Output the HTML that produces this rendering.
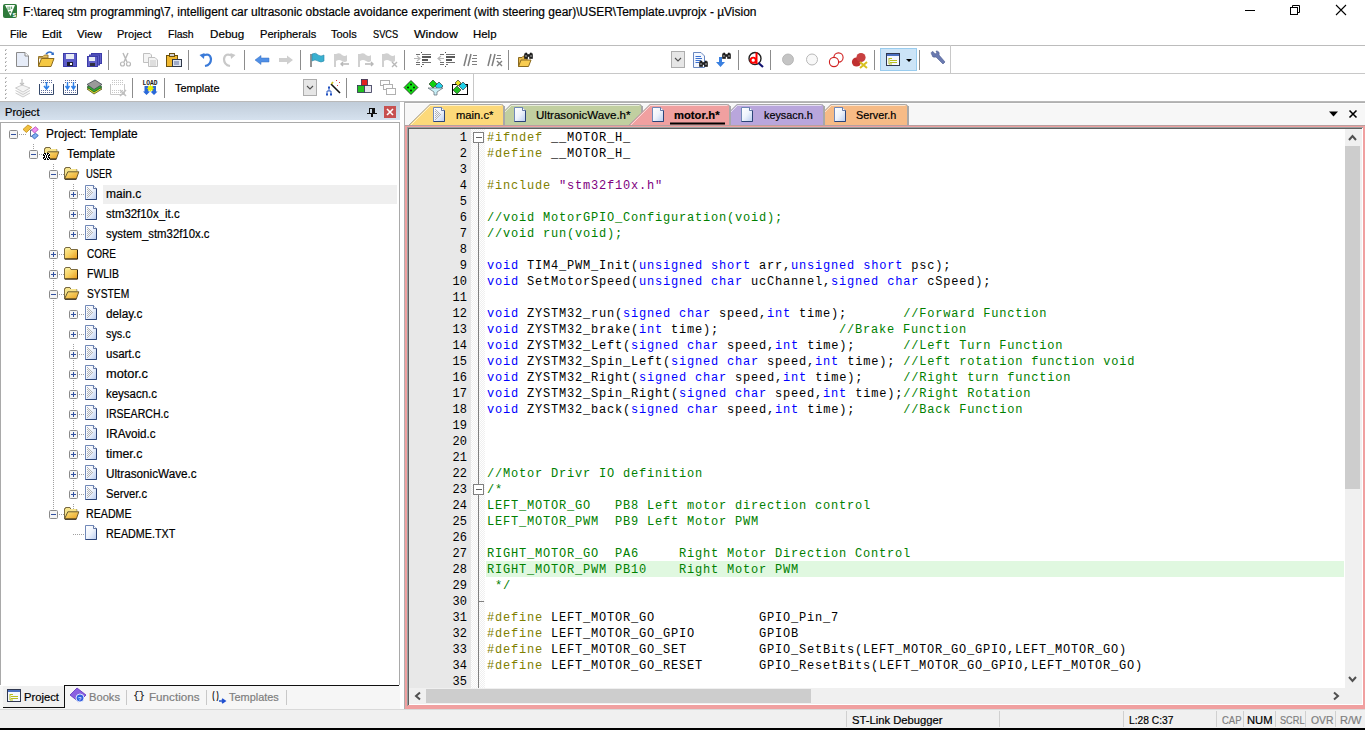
<!DOCTYPE html>
<html><head><meta charset="utf-8"><title>µVision</title>
<style>
html,body{margin:0;padding:0;width:1365px;height:730px;overflow:hidden;background:#fff;}
body{position:relative;font-family:"Liberation Sans", sans-serif;}
.tx{position:absolute;white-space:pre;line-height:1.117;transform-origin:0 0;-webkit-text-stroke:0.2px currentColor;}
.cl{position:absolute;left:487px;height:16px;white-space:pre;font-family:"Liberation Mono", monospace;font-size:12px;letter-spacing:0.8px;line-height:16px;color:#000;}
.ln{position:absolute;left:420px;width:47px;text-align:right;height:16px;font-family:"Liberation Mono", monospace;font-size:12px;line-height:16px;color:#000;}
svg{position:absolute;overflow:visible}
</style></head><body>
<div style="position:absolute;left:0px;top:0px;width:1365px;height:45px;background:#ffffff;"></div><div style="position:absolute;left:0px;top:45px;width:1365px;height:1px;background:#bcbcbc;"></div><div style="position:absolute;left:0px;top:46px;width:1365px;height:27px;background:#ffffff;"></div><div style="position:absolute;left:0px;top:73px;width:1365px;height:1px;background:#c8c8c8;"></div><div style="position:absolute;left:0px;top:74px;width:1365px;height:27px;background:#ffffff;"></div><div style="position:absolute;left:0px;top:101px;width:1365px;height:1px;background:#b9b9b9;"></div><div style="position:absolute;left:0px;top:102px;width:400px;height:607px;background:#ffffff;"></div><div style="position:absolute;left:0;top:102px;width:400px;height:18px;background:linear-gradient(#c0ccd9,#d5e1ee)"></div><div style="position:absolute;left:0px;top:122px;width:400px;height:1px;background:#a9a9a9;"></div><div style="position:absolute;left:0px;top:122px;width:1px;height:563px;background:#a9a9a9;"></div><div style="position:absolute;left:399px;top:122px;width:1px;height:563px;background:#a9a9a9;"></div><div style="position:absolute;left:0px;top:686px;width:400px;height:23px;background:#f6f6f6;"></div><div style="position:absolute;left:64px;top:685px;width:335px;height:1px;background:#101010;"></div><div style="position:absolute;left:3px;top:686px;width:62px;height:21px;background:#f0f0f0;"></div><div style="position:absolute;left:64px;top:685px;width:1px;height:23px;background:#101010;"></div><div style="position:absolute;left:3px;top:707px;width:62px;height:1px;background:#101010;"></div><div style="position:absolute;left:400px;top:102px;width:4px;height:607px;background:#ffffff;"></div><div style="position:absolute;left:404px;top:102px;width:1px;height:607px;background:#b0b0b0;"></div><div style="position:absolute;left:405px;top:102px;width:960px;height:24px;background:#f7f7f7;"></div><div style="position:absolute;left:404px;top:102px;width:961px;height:1px;background:#b0b0b0;"></div><div style="position:absolute;left:405px;top:103px;width:960px;height:1px;background:#fcfcfc;"></div><div style="position:absolute;left:405px;top:125px;width:960px;height:584px;background:#f0a0a0;"></div><div style="position:absolute;left:405px;top:125px;width:960px;height:1px;background:#b8a0a0;"></div><div style="position:absolute;left:407px;top:127px;width:956px;height:1px;background:#98a0a0;"></div><div style="position:absolute;left:407px;top:127px;width:1px;height:579px;background:#98a0a0;"></div><div style="position:absolute;left:408px;top:128px;width:954px;height:1px;background:#606060;"></div><div style="position:absolute;left:408px;top:128px;width:1px;height:577px;background:#606060;"></div><div style="position:absolute;left:409px;top:129px;width:936px;height:559px;background:#ffffff;"></div><div style="position:absolute;left:409px;top:129px;width:62px;height:559px;background:#e8e8e8;"></div><div style="position:absolute;left:471px;top:129px;width:14px;height:559px;background-color:#fff;background-image:linear-gradient(45deg,#f0f0f0 25%,transparent 25%,transparent 75%,#f0f0f0 75%),linear-gradient(45deg,#f0f0f0 25%,transparent 25%,transparent 75%,#f0f0f0 75%);background-size:2px 2px;background-position:0 0,1px 1px"></div><div style="position:absolute;left:1345px;top:129px;width:17px;height:559px;background:#f0f0f0;"></div><div style="position:absolute;left:1362px;top:128px;width:1px;height:577px;background:#ffffff;"></div><div style="position:absolute;left:1345px;top:146px;width:15px;height:343px;background:#cdcdcd;"></div><div style="position:absolute;left:409px;top:688px;width:936px;height:16px;background:#f0f0f0;"></div><div style="position:absolute;left:409px;top:704px;width:953px;height:1px;background:#ffffff;"></div><div style="position:absolute;left:426px;top:689px;width:385px;height:14px;background:#cdcdcd;"></div><div style="position:absolute;left:1345px;top:688px;width:17px;height:16px;background:#f0f0f0;"></div><div style="position:absolute;left:0px;top:710px;width:1365px;height:18px;background:#f0f0f0;"></div><div style="position:absolute;left:0px;top:709px;width:1365px;height:1px;background:#d9d9d9;"></div><div style="position:absolute;left:0px;top:728px;width:1365px;height:2px;background:#000000;"></div><div style="position:absolute;left:846px;top:711px;width:1px;height:16px;background:#d0d0d0;"></div><div style="position:absolute;left:999px;top:711px;width:1px;height:16px;background:#d0d0d0;"></div><div style="position:absolute;left:1123px;top:711px;width:1px;height:16px;background:#d0d0d0;"></div><div style="position:absolute;left:1216px;top:711px;width:1px;height:16px;background:#d0d0d0;"></div><div style="position:absolute;left:1243px;top:711px;width:1px;height:16px;background:#d0d0d0;"></div><div style="position:absolute;left:1275px;top:711px;width:1px;height:16px;background:#d0d0d0;"></div><div style="position:absolute;left:1305px;top:711px;width:1px;height:16px;background:#d0d0d0;"></div><div style="position:absolute;left:1335px;top:711px;width:1px;height:16px;background:#d0d0d0;"></div><div style="position:absolute;left:103px;top:185px;width:294px;height:19px;background:#efefef;"></div><div style="position:absolute;left:486px;top:561px;width:858px;height:16px;background:#e0f8e0;"></div>
<svg style="position:absolute;left:0;top:0" width="1365" height="730" viewBox="0 0 1365 730"><rect x="3" y="4" width="14" height="14" rx="2" fill="#2f7a3b"/>
<path d="M5 5 H15 L10.5 16 Z" fill="#ffffff"/><path d="M8 6.5 V10 M9.8 6.5 V10 M11.6 6.5 V9" stroke="#4a9a58" stroke-width="0.9"/><path d="M9 13 L10 11 L11 13" stroke="#2f7a3b" stroke-width="0.8" fill="none"/>
<text x="12.6" y="16.8" font-family="Liberation Sans" font-weight="bold" font-size="7" fill="#fff">s</text>
<rect x="1245" y="10" width="10" height="1" fill="#000"/>
<rect x="1290.5" y="7.5" width="7" height="7" fill="none" stroke="#000" stroke-width="1"/>
<path d="M1292.5 7.5 V5.5 H1299.5 V12.5 H1297.5" fill="none" stroke="#000" stroke-width="1"/>
<path d="M1336 5 L1346 15 M1346 5 L1336 15" stroke="#000" stroke-width="1.1"/>
<rect x="5" y="50" width="1" height="1" fill="#a0a0a0"/><rect x="6" y="49" width="1" height="1" fill="#c8c8c8"/><rect x="5" y="49" width="1" height="1" fill="#d8d8d8"/>
<rect x="5" y="54" width="1" height="1" fill="#a0a0a0"/><rect x="6" y="53" width="1" height="1" fill="#c8c8c8"/><rect x="5" y="53" width="1" height="1" fill="#d8d8d8"/>
<rect x="5" y="58" width="1" height="1" fill="#a0a0a0"/><rect x="6" y="57" width="1" height="1" fill="#c8c8c8"/><rect x="5" y="57" width="1" height="1" fill="#d8d8d8"/>
<rect x="5" y="62" width="1" height="1" fill="#a0a0a0"/><rect x="6" y="61" width="1" height="1" fill="#c8c8c8"/><rect x="5" y="61" width="1" height="1" fill="#d8d8d8"/>
<rect x="5" y="66" width="1" height="1" fill="#a0a0a0"/><rect x="6" y="65" width="1" height="1" fill="#c8c8c8"/><rect x="5" y="65" width="1" height="1" fill="#d8d8d8"/>
<rect x="5" y="70" width="1" height="1" fill="#a0a0a0"/><rect x="6" y="69" width="1" height="1" fill="#c8c8c8"/><rect x="5" y="69" width="1" height="1" fill="#d8d8d8"/>
<rect x="5" y="78" width="1" height="1" fill="#a0a0a0"/><rect x="6" y="77" width="1" height="1" fill="#c8c8c8"/><rect x="5" y="77" width="1" height="1" fill="#d8d8d8"/>
<rect x="5" y="82" width="1" height="1" fill="#a0a0a0"/><rect x="6" y="81" width="1" height="1" fill="#c8c8c8"/><rect x="5" y="81" width="1" height="1" fill="#d8d8d8"/>
<rect x="5" y="86" width="1" height="1" fill="#a0a0a0"/><rect x="6" y="85" width="1" height="1" fill="#c8c8c8"/><rect x="5" y="85" width="1" height="1" fill="#d8d8d8"/>
<rect x="5" y="90" width="1" height="1" fill="#a0a0a0"/><rect x="6" y="89" width="1" height="1" fill="#c8c8c8"/><rect x="5" y="89" width="1" height="1" fill="#d8d8d8"/>
<rect x="5" y="94" width="1" height="1" fill="#a0a0a0"/><rect x="6" y="93" width="1" height="1" fill="#c8c8c8"/><rect x="5" y="93" width="1" height="1" fill="#d8d8d8"/>
<rect x="5" y="98" width="1" height="1" fill="#a0a0a0"/><rect x="6" y="97" width="1" height="1" fill="#c8c8c8"/><rect x="5" y="97" width="1" height="1" fill="#d8d8d8"/>
<rect x="108" y="50" width="1" height="20" fill="#8c8c8c"/>
<rect x="188" y="50" width="1" height="20" fill="#8c8c8c"/>
<rect x="244" y="50" width="1" height="20" fill="#8c8c8c"/>
<rect x="300" y="50" width="1" height="20" fill="#8c8c8c"/>
<rect x="404" y="50" width="1" height="20" fill="#8c8c8c"/>
<rect x="508" y="50" width="1" height="20" fill="#8c8c8c"/>
<rect x="738" y="50" width="1" height="20" fill="#8c8c8c"/>
<rect x="770" y="50" width="1" height="20" fill="#8c8c8c"/>
<rect x="874" y="50" width="1" height="20" fill="#8c8c8c"/>
<rect x="919" y="50" width="1" height="20" fill="#8c8c8c"/>
<rect x="950" y="45" width="1" height="28" fill="#c8c8c8"/>
<rect x="132" y="78" width="1" height="20" fill="#8c8c8c"/>
<rect x="164" y="78" width="1" height="20" fill="#8c8c8c"/>
<rect x="346" y="78" width="1" height="20" fill="#8c8c8c"/>
<rect x="473" y="74" width="1" height="27" fill="#c8c8c8"/>
<path d="M16.5 52.5 H25 L28.5 56 V66.5 H16.5 Z" fill="#e6ecf8" stroke="#8a8a8a"/><path d="M25 52.5 V56 H28.5" fill="#fff" stroke="#8a8a8a"/>
<path d="M38.5 56.5 H43 L44.5 55 H48 V58 H38.5 Z" fill="#e8c060" stroke="#9a7a30"/>
<path d="M38.5 58 V66.5 H51 L54 58.5 H41.5 L38.5 66" fill="#f5c842" stroke="#8a6a20"/>
<path d="M46 54 Q50 50 53 54" fill="none" stroke="#2e6cc8" stroke-width="1.5"/><path d="M51 55 L54 55 L53.5 52" fill="#2e6cc8"/>
<rect x="63.5" y="53.5" width="13" height="13" fill="#5c5cc8" stroke="#3c3ca8"/><rect x="66" y="54" width="8" height="5" fill="#e8ecf4"/><rect x="67" y="62" width="6" height="4" fill="#202030"/><rect x="70" y="63" width="2" height="2" fill="#fff"/>
<rect x="91.5" y="53.5" width="10" height="10" fill="#6060c8" stroke="#3c3ca8"/>
<rect x="89.5" y="55.0" width="10" height="10" fill="#6060c8" stroke="#3c3ca8"/>
<rect x="87.5" y="56.5" width="10" height="10" fill="#6060c8" stroke="#3c3ca8"/>
<rect x="89" y="57" width="6" height="4" fill="#e8ecf4"/><rect x="90" y="63" width="5" height="3" fill="#303040"/>
<path d="M123 53 L127 62 M128 53 L124 62" stroke="#b8b8b8" stroke-width="1.4"/><circle cx="122.5" cy="64" r="2" fill="none" stroke="#b8b8b8" stroke-width="1.2"/><circle cx="128.5" cy="64" r="2" fill="none" stroke="#b8b8b8" stroke-width="1.2"/>
<path d="M143.5 53.5 H150 L151.5 55 V62.5 H143.5 Z" fill="#f4f4f4" stroke="#c0c0c0"/><path d="M148.5 57.5 H155 L157.5 60 V66.5 H148.5 Z" fill="#f4f4f4" stroke="#c0c0c0"/><path d="M150 61 H156 M150 63 H156 M150 65 H156" stroke="#c8c8c8"/>
<rect x="166.5" y="55.5" width="11" height="11" fill="#f0b830" stroke="#6a5010"/><rect x="169.5" y="53.5" width="5" height="3" fill="#d0d0d0" stroke="#6a5010"/><rect x="172.5" y="59.5" width="9" height="7" fill="#dfe6f0" stroke="#303848"/><path d="M174 62 H179 M174 64 H179" stroke="#6070a0"/>
<path d="M202 56 Q210 52 211 59 Q211 65 205 66" fill="none" stroke="#3a7ad8" stroke-width="2.2"/><path d="M199.5 55 L204.5 53 L204 59 Z" fill="#3a7ad8"/>
<path d="M233 56 Q225 52 224 59 Q224 65 230 66" fill="none" stroke="#c8c8c8" stroke-width="2.2"/><path d="M235.5 55 L230.5 53 L231 59 Z" fill="#c8c8c8"/>
<path d="M255 60 L261 55.5 V58 H269 V62 H261 V64.5 Z" fill="#4f8fe6" stroke="#3a70c0" stroke-width="0.5"/>
<path d="M293 60 L287 55.5 V58 H279 V62 H287 V64.5 Z" fill="#cfcfcf"/>
<path d="M311 54 V67" stroke="#707070" stroke-width="1.5"/><path d="M312 54 Q316 52 318 55 Q321 57 324 55 V61 Q321 63 318 61 Q315 59 312 61 Z" fill="#3ab0d0" stroke="#2a88a8" stroke-width="0.6"/>
<path d="M335 54 V67" stroke="#c0c0c0" stroke-width="1.5"/><path d="M336 54 Q340 52 342 55 Q345 57 347 55 V61 Q345 63 342 61 Q339 59 336 61 Z" fill="#d0d0d0"/>
<path d="M349 64 H341 M343 62 L341 64 L343 66" stroke="#b8b8b8" stroke-width="1.4" fill="none"/>
<path d="M359 54 V67" stroke="#c0c0c0" stroke-width="1.5"/><path d="M360 54 Q364 52 366 55 Q369 57 371 55 V61 Q369 63 366 61 Q363 59 360 61 Z" fill="#d0d0d0"/>
<path d="M365 64 H373 M371 62 L373 64 L371 66" stroke="#b8b8b8" stroke-width="1.4" fill="none"/>
<path d="M383 54 V67" stroke="#c0c0c0" stroke-width="1.5"/><path d="M384 54 Q388 52 390 55 Q393 57 395 55 V61 Q393 63 390 61 Q387 59 384 61 Z" fill="#d0d0d0"/>
<path d="M392 62 L397 67 M397 62 L392 67" stroke="#b8b8b8" stroke-width="1.4"/>
<rect x="421" y="52" width="1" height="1" fill="#505050"/><rect x="421" y="66" width="1" height="1" fill="#505050"/>
<rect x="416" y="54" width="4" height="1" fill="#707070"/><rect x="416" y="62" width="4" height="1" fill="#707070"/><rect x="416" y="64" width="4" height="1" fill="#707070"/>
<rect x="422" y="54" width="9" height="1" fill="#707070"/><rect x="422" y="56" width="9" height="2" fill="#5a5a5a"/><rect x="422" y="59" width="6" height="2" fill="#5a5a5a"/><rect x="422" y="62" width="9" height="1" fill="#707070"/><rect x="422" y="64" width="2" height="1" fill="#707070"/>
<path d="M414 58.5 H420 M417 56 L420 58.5 L417 61" stroke="#b8b8b8" stroke-width="1.2" fill="none"/>
<rect x="445" y="52" width="1" height="1" fill="#505050"/><rect x="445" y="66" width="1" height="1" fill="#505050"/>
<rect x="440" y="54" width="4" height="1" fill="#707070"/><rect x="440" y="62" width="4" height="1" fill="#707070"/><rect x="440" y="64" width="4" height="1" fill="#707070"/>
<rect x="446" y="54" width="9" height="1" fill="#707070"/><rect x="446" y="56" width="9" height="2" fill="#5a5a5a"/><rect x="446" y="59" width="6" height="2" fill="#5a5a5a"/><rect x="446" y="62" width="9" height="1" fill="#707070"/><rect x="446" y="64" width="2" height="1" fill="#707070"/>
<path d="M444 58.5 H438 M441 56 L438 58.5 L441 61" stroke="#b8b8b8" stroke-width="1.2" fill="none"/>
<path d="M464 66 L467 54 M468 66 L471 54" stroke="#808080" stroke-width="1.5"/>
<rect x="473" y="55" width="4" height="1" fill="#808080"/><rect x="472" y="58" width="5" height="1" fill="#808080"/>
<path d="M488 66 L491 54 M492 66 L495 54" stroke="#808080" stroke-width="1.5"/>
<rect x="497" y="55" width="4" height="1" fill="#808080"/><rect x="496" y="58" width="5" height="1" fill="#808080"/>
<rect x="472" y="61" width="5" height="1" fill="#808080"/><rect x="472" y="64" width="5" height="1" fill="#808080"/>
<path d="M497 61 L502 66 M502 61 L497 66" stroke="#808080" stroke-width="1.4"/>
<path d="M518.5 57.5 H522 L523.5 56 H527 V66.5 H518.5 Z" fill="#e6b848" stroke="#8a6a20"/><path d="M518.5 66.5 L521 60 H531 L528.5 66.5 Z" fill="#f8cc50" stroke="#8a6a20"/>
<path d="M524.5 54.5 Q524.5 53 526 53 H527 V54.5 H530 V53 H531 Q532.5 53 532.5 54.5 V58.5 H529.5 V56.5 H527.5 V58.5 H524.5 Z" fill="#202020" stroke="#101010" stroke-width="0.6"/>
<rect x="525.5" y="55" width="1" height="2" fill="#b0b0b0"/><rect x="530.5" y="55" width="1" height="2" fill="#b0b0b0"/>
<rect x="671.5" y="51.5" width="13" height="16" fill="#e6e6e6" stroke="#adadad"/><path d="M675 58 L678 61 L681 58" fill="none" stroke="#505050" stroke-width="1.1"/>
<path d="M693.5 52.5 H701 L704.5 56 V67.5 H693.5 Z" fill="#f4f8ff" stroke="#6a88c0"/><path d="M695.5 56.5 H701 M695.5 58.5 H702 M695.5 60.5 H701 M695.5 62.5 H699" stroke="#3a70d0" stroke-width="1"/>
<path d="M699.5 62.5 Q699.5 61 701 61 H702 V62.5 H705 V61 H706 Q707.5 61 707.5 62.5 V66.5 H704.5 V64.5 H702.5 V66.5 H699.5 Z" fill="#202020" stroke="#101010" stroke-width="0.6"/>
<rect x="700.5" y="63" width="1" height="2" fill="#b0b0b0"/><rect x="705.5" y="63" width="1" height="2" fill="#b0b0b0"/>
<path d="M719 57 V62 H716 L720.5 67 L725 62 H722 V57 Z" fill="#3a80e0"/>
<path d="M722.5 54.5 Q722.5 53 724 53 H725 V54.5 H728 V53 H729 Q730.5 53 730.5 54.5 V58.5 H727.5 V56.5 H725.5 V58.5 H722.5 Z" fill="#202020" stroke="#101010" stroke-width="0.6"/>
<rect x="723.5" y="55" width="1" height="2" fill="#b0b0b0"/><rect x="728.5" y="55" width="1" height="2" fill="#b0b0b0"/>
<circle cx="755" cy="58.5" r="6" fill="#fff" stroke="#202020" stroke-width="1.4"/><path d="M758.5 63 L763 67" stroke="#101070" stroke-width="2.2"/>
<rect x="755.5" y="52.5" width="2" height="11.5" fill="#ff0000"/><circle cx="753.2" cy="60.2" r="2.6" fill="none" stroke="#ff0000" stroke-width="1.9"/>
<circle cx="788" cy="59.5" r="5.5" fill="#c4c4c4" stroke="#b0b0b0" stroke-width="0.8"/>
<circle cx="812" cy="59.5" r="5.5" fill="#f8f8f8" stroke="#b8b8b8" stroke-width="1"/>
<circle cx="838.5" cy="57.5" r="4.6" fill="#fff" stroke="#d02020" stroke-width="1.1"/><circle cx="834" cy="62" r="4.6" fill="#fff" stroke="#d02020" stroke-width="1.1"/>
<circle cx="856.5" cy="62" r="4.6" fill="#c03030"/><circle cx="861" cy="57.5" r="4.6" fill="#c84040"/><path d="M860 62 L867 68 M867 62 L860 68" stroke="#d8c020" stroke-width="2"/>
<rect x="880.5" y="48.5" width="36" height="22" fill="#cce4f7" stroke="#99ccee"/>
<rect x="886.5" y="53.5" width="13" height="12" fill="#f4f8ff" stroke="#303850"/><rect x="887" y="54" width="12" height="2" fill="#4a70c0"/><path d="M889 58 V64 M889 58.5 H892 M890 60.5 H897 M890 62.5 H897 M889 64 H892" stroke="#b8c020" stroke-width="1"/>
<path d="M906 59 H912 L909 62 Z" fill="#000"/>
<path d="M932 55 Q930 52 933 51.5 L935 54 L937 53 L936 51 Q940 51 939 55 L945 62 L943 64 L936 57 Q932 58 932 55 Z" fill="#6a7ab0" stroke="#4a5a90" stroke-width="0.6"/>
<path d="M15.5 88 L22 85 L30 88 L23 92 Z M15.5 90.5 L23 94.5 L30 90.5 M15.5 93 L23 97 L30 93" fill="#f4f4f4" stroke="#c0c0c0" stroke-width="0.8"/><path d="M22 79 V85 M20 83 L22 85 L24 83" stroke="#c0c0c0" stroke-width="1.2" fill="none"/>
<path d="M39.5 84 V94.5 H53.5 V84" fill="none" stroke="#34486a" stroke-width="1"/>
<rect x="41" y="80" width="1" height="1" fill="#6070a0"/>
<rect x="43" y="80" width="1" height="1" fill="#6070a0"/>
<rect x="45" y="80" width="1" height="1" fill="#6070a0"/>
<rect x="47" y="80" width="1" height="1" fill="#6070a0"/>
<rect x="49" y="80" width="1" height="1" fill="#6070a0"/>
<rect x="51" y="80" width="1" height="1" fill="#6070a0"/>
<rect x="41" y="82" width="1" height="1" fill="#6070a0"/>
<rect x="43" y="82" width="1" height="1" fill="#6070a0"/>
<rect x="45" y="82" width="1" height="1" fill="#6070a0"/>
<rect x="47" y="82" width="1" height="1" fill="#6070a0"/>
<rect x="49" y="82" width="1" height="1" fill="#6070a0"/>
<rect x="51" y="82" width="1" height="1" fill="#6070a0"/>
<rect x="41" y="90" width="1" height="1" fill="#6070a0"/>
<rect x="43" y="90" width="1" height="1" fill="#6070a0"/>
<rect x="45" y="90" width="1" height="1" fill="#6070a0"/>
<rect x="47" y="90" width="1" height="1" fill="#6070a0"/>
<rect x="49" y="90" width="1" height="1" fill="#6070a0"/>
<rect x="51" y="90" width="1" height="1" fill="#6070a0"/>
<rect x="41" y="92" width="1" height="1" fill="#6070a0"/>
<rect x="43" y="92" width="1" height="1" fill="#6070a0"/>
<rect x="45" y="92" width="1" height="1" fill="#6070a0"/>
<rect x="47" y="92" width="1" height="1" fill="#6070a0"/>
<rect x="49" y="92" width="1" height="1" fill="#6070a0"/>
<rect x="51" y="92" width="1" height="1" fill="#6070a0"/>
<path d="M46.5 82 V88 M44 86 L46.5 89 L49 86" stroke="#2e80e8" stroke-width="1.5" fill="none"/>
<path d="M63.5 84 V94.5 H77.5 V84" fill="none" stroke="#34486a" stroke-width="1"/>
<rect x="65" y="80" width="1" height="1" fill="#6070a0"/>
<rect x="67" y="80" width="1" height="1" fill="#6070a0"/>
<rect x="69" y="80" width="1" height="1" fill="#6070a0"/>
<rect x="71" y="80" width="1" height="1" fill="#6070a0"/>
<rect x="73" y="80" width="1" height="1" fill="#6070a0"/>
<rect x="75" y="80" width="1" height="1" fill="#6070a0"/>
<rect x="65" y="82" width="1" height="1" fill="#6070a0"/>
<rect x="67" y="82" width="1" height="1" fill="#6070a0"/>
<rect x="69" y="82" width="1" height="1" fill="#6070a0"/>
<rect x="71" y="82" width="1" height="1" fill="#6070a0"/>
<rect x="73" y="82" width="1" height="1" fill="#6070a0"/>
<rect x="75" y="82" width="1" height="1" fill="#6070a0"/>
<rect x="65" y="90" width="1" height="1" fill="#6070a0"/>
<rect x="67" y="90" width="1" height="1" fill="#6070a0"/>
<rect x="69" y="90" width="1" height="1" fill="#6070a0"/>
<rect x="71" y="90" width="1" height="1" fill="#6070a0"/>
<rect x="73" y="90" width="1" height="1" fill="#6070a0"/>
<rect x="75" y="90" width="1" height="1" fill="#6070a0"/>
<rect x="65" y="92" width="1" height="1" fill="#6070a0"/>
<rect x="67" y="92" width="1" height="1" fill="#6070a0"/>
<rect x="69" y="92" width="1" height="1" fill="#6070a0"/>
<rect x="71" y="92" width="1" height="1" fill="#6070a0"/>
<rect x="73" y="92" width="1" height="1" fill="#6070a0"/>
<rect x="75" y="92" width="1" height="1" fill="#6070a0"/>
<path d="M67.5 82 V88 M65.5 86 L67.5 89 L69.5 86 M73.5 82 V88 M71.5 86 L73.5 89 L75.5 86" stroke="#2e80e8" stroke-width="1.4" fill="none"/>
<path d="M87 89 L95 85 L102 89 L94 94 Z" fill="#e0e030" stroke="#505020" stroke-width="0.8"/>
<path d="M87 87 L95 83 L102 87 L94 92 Z" fill="#30b030" stroke="#205020" stroke-width="0.8"/>
<path d="M87 84.5 L95 80 L102 84.5 L94 89.5 Z" fill="#9a9a9a" stroke="#404850" stroke-width="0.8"/>
<path d="M110.5 84 V94.5 H124.5 V84" fill="none" stroke="#c8c8c8"/>
<rect x="112" y="80" width="1" height="1" fill="#c8c8c8"/>
<rect x="114" y="80" width="1" height="1" fill="#c8c8c8"/>
<rect x="116" y="80" width="1" height="1" fill="#c8c8c8"/>
<rect x="118" y="80" width="1" height="1" fill="#c8c8c8"/>
<rect x="120" y="80" width="1" height="1" fill="#c8c8c8"/>
<rect x="122" y="80" width="1" height="1" fill="#c8c8c8"/>
<rect x="112" y="82" width="1" height="1" fill="#c8c8c8"/>
<rect x="114" y="82" width="1" height="1" fill="#c8c8c8"/>
<rect x="116" y="82" width="1" height="1" fill="#c8c8c8"/>
<rect x="118" y="82" width="1" height="1" fill="#c8c8c8"/>
<rect x="120" y="82" width="1" height="1" fill="#c8c8c8"/>
<rect x="122" y="82" width="1" height="1" fill="#c8c8c8"/>
<rect x="112" y="84" width="1" height="1" fill="#c8c8c8"/>
<rect x="114" y="84" width="1" height="1" fill="#c8c8c8"/>
<rect x="116" y="84" width="1" height="1" fill="#c8c8c8"/>
<rect x="118" y="84" width="1" height="1" fill="#c8c8c8"/>
<rect x="120" y="84" width="1" height="1" fill="#c8c8c8"/>
<rect x="122" y="84" width="1" height="1" fill="#c8c8c8"/>
<rect x="112" y="90" width="1" height="1" fill="#c8c8c8"/>
<rect x="114" y="90" width="1" height="1" fill="#c8c8c8"/>
<rect x="116" y="90" width="1" height="1" fill="#c8c8c8"/>
<rect x="118" y="90" width="1" height="1" fill="#c8c8c8"/>
<rect x="120" y="90" width="1" height="1" fill="#c8c8c8"/>
<rect x="122" y="90" width="1" height="1" fill="#c8c8c8"/>
<rect x="112" y="92" width="1" height="1" fill="#c8c8c8"/>
<rect x="114" y="92" width="1" height="1" fill="#c8c8c8"/>
<rect x="116" y="92" width="1" height="1" fill="#c8c8c8"/>
<rect x="118" y="92" width="1" height="1" fill="#c8c8c8"/>
<rect x="120" y="92" width="1" height="1" fill="#c8c8c8"/>
<rect x="122" y="92" width="1" height="1" fill="#c8c8c8"/>
<path d="M120 90 L126 96 M126 90 L120 96" stroke="#c0c0c0" stroke-width="1.6"/>
<text x="142.5" y="85" font-family="Liberation Mono" font-size="7" font-weight="bold" fill="#202020" textLength="15" lengthAdjust="spacingAndGlyphs">LOAD</text>
<path d="M144.5 86 V91.5 H143 L146.5 95 L150 91.5 H148.5 V86 Z M152 86 V91.5 H150.5 L154 95 L157.5 91.5 H156 V86 Z" fill="#2a68d8"/><polygon points="154.30,88.30 152.53,89.14 153.19,90.99 151.34,90.33 150.50,92.10 149.66,90.33 147.81,90.99 148.47,89.14 146.70,88.30 148.47,87.46 147.81,85.61 149.66,86.27 150.50,84.50 151.34,86.27 153.19,85.61 152.53,87.46" fill="#e6f000"/>
<rect x="303.5" y="79.5" width="13" height="16" fill="#e6e6e6" stroke="#adadad"/><path d="M307 86 L310 89 L313 86" fill="none" stroke="#505050" stroke-width="1.1"/>
<path d="M331 84 L340 93" stroke="#101010" stroke-width="1.6"/><path d="M331.5 84 L333 82" stroke="#d0c020" stroke-width="1.6"/>
<path d="M329 88 V91 M327 91 H331 M327 91 V94 M331 91 V94" stroke="#2050c0" stroke-width="0.9" fill="none"/><rect x="328" y="86.5" width="2" height="2" fill="#2050c0"/><rect x="326" y="93.5" width="2" height="2" fill="#2050c0"/><rect x="330" y="93.5" width="2" height="2" fill="#2050c0"/>
<rect x="336" y="80" width="1" height="1" fill="#e04040"/><rect x="339" y="82" width="1" height="1" fill="#e04040"/><rect x="337" y="85" width="1" height="1" fill="#e04040"/>
<rect x="361.5" y="79.5" width="6" height="6" fill="#e02020" stroke="#303050" stroke-width="0.8"/><rect x="357.5" y="85.5" width="7" height="7" fill="#20c020" stroke="#303050" stroke-width="0.8"/><rect x="364.5" y="85.5" width="7" height="7" fill="#e8e8f0" stroke="#303050" stroke-width="0.8"/>
<rect x="380.5" y="80.5" width="9" height="5" fill="#fff" stroke="#b0b0b0"/><rect x="383.5" y="84.5" width="9" height="5" fill="#fff" stroke="#b0b0b0"/><rect x="386.5" y="88.5" width="9" height="6" fill="#fff" stroke="#b0b0b0"/>
<path d="M411 80.5 L418 87.5 L411 94.5 L404 87.5 Z" fill="#10e010" stroke="#202020" stroke-width="0.8"/><circle cx="411" cy="84.5" r="0.9" fill="#000"/><circle cx="408" cy="87.5" r="0.9" fill="#000"/><circle cx="414" cy="87.5" r="0.9" fill="#000"/><circle cx="411" cy="90.5" r="0.9" fill="#000"/>
<path d="M433 80 L437 84 L433 88 L429 84 Z" fill="#10d010" stroke="#202020" stroke-width="0.6"/><path d="M439 82 L443 86 L439 90 L435 86 Z" fill="#20d0e8" stroke="#202020" stroke-width="0.6"/><path d="M428 88 H443 L437 92 V95 H434 V92 Z" fill="#c8f0f8" stroke="#606870" stroke-width="0.7"/>
<rect x="452.5" y="84.5" width="15" height="10" fill="#fff" stroke="#000" stroke-width="1"/><path d="M455 83 L458 80 L461 83 L458 86 Z" fill="#e8e020" stroke="#202020" stroke-width="0.6"/><path d="M463 82 L467 86 L463 90 L459 86 Z" fill="#20d0e8" stroke="#202020" stroke-width="0.6"/><path d="M457 86 L461 90 L457 94 L453 90 Z" fill="#20c020" stroke="#202020" stroke-width="0.6"/>
<path d="M369 108 H375 V113 H377 V114 H373 V117 H371 V114 H367 V113 H369 Z" fill="#101010"/><rect x="370" y="109" width="2" height="4" fill="#c8d4e0"/>
<rect x="384" y="106" width="12" height="12" fill="#c75050"/><path d="M387 109 L393 115 M393 109 L387 115" stroke="#fff" stroke-width="1.6"/><defs><linearGradient id="fg" x1="0" y1="0" x2="1" y2="1"><stop offset="0" stop-color="#ffffff"/><stop offset="0.5" stop-color="#eef3fc"/><stop offset="1" stop-color="#b8ccf0"/></linearGradient><linearGradient id="fo" x1="0" y1="0" x2="1" y2="1"><stop offset="0" stop-color="#fde680"/><stop offset="1" stop-color="#eaa020"/></linearGradient><linearGradient id="fc" x1="0" y1="0" x2="1" y2="1"><stop offset="0" stop-color="#fdf0a0"/><stop offset="0.5" stop-color="#f8d060"/><stop offset="1" stop-color="#e89818"/></linearGradient></defs>
<rect x="33" y="144" width="1" height="1" fill="#a0a0a0"/>
<rect x="33" y="146" width="1" height="1" fill="#a0a0a0"/>
<rect x="33" y="148" width="1" height="1" fill="#a0a0a0"/>
<rect x="33" y="150" width="1" height="1" fill="#a0a0a0"/>
<rect x="53" y="164" width="1" height="1" fill="#a0a0a0"/>
<rect x="53" y="166" width="1" height="1" fill="#a0a0a0"/>
<rect x="53" y="168" width="1" height="1" fill="#a0a0a0"/>
<rect x="53" y="170" width="1" height="1" fill="#a0a0a0"/>
<rect x="53" y="172" width="1" height="1" fill="#a0a0a0"/>
<rect x="53" y="174" width="1" height="1" fill="#a0a0a0"/>
<rect x="53" y="176" width="1" height="1" fill="#a0a0a0"/>
<rect x="53" y="178" width="1" height="1" fill="#a0a0a0"/>
<rect x="53" y="180" width="1" height="1" fill="#a0a0a0"/>
<rect x="53" y="182" width="1" height="1" fill="#a0a0a0"/>
<rect x="53" y="184" width="1" height="1" fill="#a0a0a0"/>
<rect x="53" y="186" width="1" height="1" fill="#a0a0a0"/>
<rect x="53" y="188" width="1" height="1" fill="#a0a0a0"/>
<rect x="53" y="190" width="1" height="1" fill="#a0a0a0"/>
<rect x="53" y="192" width="1" height="1" fill="#a0a0a0"/>
<rect x="53" y="194" width="1" height="1" fill="#a0a0a0"/>
<rect x="53" y="196" width="1" height="1" fill="#a0a0a0"/>
<rect x="53" y="198" width="1" height="1" fill="#a0a0a0"/>
<rect x="53" y="200" width="1" height="1" fill="#a0a0a0"/>
<rect x="53" y="202" width="1" height="1" fill="#a0a0a0"/>
<rect x="53" y="204" width="1" height="1" fill="#a0a0a0"/>
<rect x="53" y="206" width="1" height="1" fill="#a0a0a0"/>
<rect x="53" y="208" width="1" height="1" fill="#a0a0a0"/>
<rect x="53" y="210" width="1" height="1" fill="#a0a0a0"/>
<rect x="53" y="212" width="1" height="1" fill="#a0a0a0"/>
<rect x="53" y="214" width="1" height="1" fill="#a0a0a0"/>
<rect x="53" y="216" width="1" height="1" fill="#a0a0a0"/>
<rect x="53" y="218" width="1" height="1" fill="#a0a0a0"/>
<rect x="53" y="220" width="1" height="1" fill="#a0a0a0"/>
<rect x="53" y="222" width="1" height="1" fill="#a0a0a0"/>
<rect x="53" y="224" width="1" height="1" fill="#a0a0a0"/>
<rect x="53" y="226" width="1" height="1" fill="#a0a0a0"/>
<rect x="53" y="228" width="1" height="1" fill="#a0a0a0"/>
<rect x="53" y="230" width="1" height="1" fill="#a0a0a0"/>
<rect x="53" y="232" width="1" height="1" fill="#a0a0a0"/>
<rect x="53" y="234" width="1" height="1" fill="#a0a0a0"/>
<rect x="53" y="236" width="1" height="1" fill="#a0a0a0"/>
<rect x="53" y="238" width="1" height="1" fill="#a0a0a0"/>
<rect x="53" y="240" width="1" height="1" fill="#a0a0a0"/>
<rect x="53" y="242" width="1" height="1" fill="#a0a0a0"/>
<rect x="53" y="244" width="1" height="1" fill="#a0a0a0"/>
<rect x="53" y="246" width="1" height="1" fill="#a0a0a0"/>
<rect x="53" y="248" width="1" height="1" fill="#a0a0a0"/>
<rect x="53" y="250" width="1" height="1" fill="#a0a0a0"/>
<rect x="53" y="252" width="1" height="1" fill="#a0a0a0"/>
<rect x="53" y="254" width="1" height="1" fill="#a0a0a0"/>
<rect x="53" y="256" width="1" height="1" fill="#a0a0a0"/>
<rect x="53" y="258" width="1" height="1" fill="#a0a0a0"/>
<rect x="53" y="260" width="1" height="1" fill="#a0a0a0"/>
<rect x="53" y="262" width="1" height="1" fill="#a0a0a0"/>
<rect x="53" y="264" width="1" height="1" fill="#a0a0a0"/>
<rect x="53" y="266" width="1" height="1" fill="#a0a0a0"/>
<rect x="53" y="268" width="1" height="1" fill="#a0a0a0"/>
<rect x="53" y="270" width="1" height="1" fill="#a0a0a0"/>
<rect x="53" y="272" width="1" height="1" fill="#a0a0a0"/>
<rect x="53" y="274" width="1" height="1" fill="#a0a0a0"/>
<rect x="53" y="276" width="1" height="1" fill="#a0a0a0"/>
<rect x="53" y="278" width="1" height="1" fill="#a0a0a0"/>
<rect x="53" y="280" width="1" height="1" fill="#a0a0a0"/>
<rect x="53" y="282" width="1" height="1" fill="#a0a0a0"/>
<rect x="53" y="284" width="1" height="1" fill="#a0a0a0"/>
<rect x="53" y="286" width="1" height="1" fill="#a0a0a0"/>
<rect x="53" y="288" width="1" height="1" fill="#a0a0a0"/>
<rect x="53" y="290" width="1" height="1" fill="#a0a0a0"/>
<rect x="53" y="292" width="1" height="1" fill="#a0a0a0"/>
<rect x="53" y="294" width="1" height="1" fill="#a0a0a0"/>
<rect x="53" y="296" width="1" height="1" fill="#a0a0a0"/>
<rect x="53" y="298" width="1" height="1" fill="#a0a0a0"/>
<rect x="53" y="300" width="1" height="1" fill="#a0a0a0"/>
<rect x="53" y="302" width="1" height="1" fill="#a0a0a0"/>
<rect x="53" y="304" width="1" height="1" fill="#a0a0a0"/>
<rect x="53" y="306" width="1" height="1" fill="#a0a0a0"/>
<rect x="53" y="308" width="1" height="1" fill="#a0a0a0"/>
<rect x="53" y="310" width="1" height="1" fill="#a0a0a0"/>
<rect x="53" y="312" width="1" height="1" fill="#a0a0a0"/>
<rect x="53" y="314" width="1" height="1" fill="#a0a0a0"/>
<rect x="53" y="316" width="1" height="1" fill="#a0a0a0"/>
<rect x="53" y="318" width="1" height="1" fill="#a0a0a0"/>
<rect x="53" y="320" width="1" height="1" fill="#a0a0a0"/>
<rect x="53" y="322" width="1" height="1" fill="#a0a0a0"/>
<rect x="53" y="324" width="1" height="1" fill="#a0a0a0"/>
<rect x="53" y="326" width="1" height="1" fill="#a0a0a0"/>
<rect x="53" y="328" width="1" height="1" fill="#a0a0a0"/>
<rect x="53" y="330" width="1" height="1" fill="#a0a0a0"/>
<rect x="53" y="332" width="1" height="1" fill="#a0a0a0"/>
<rect x="53" y="334" width="1" height="1" fill="#a0a0a0"/>
<rect x="53" y="336" width="1" height="1" fill="#a0a0a0"/>
<rect x="53" y="338" width="1" height="1" fill="#a0a0a0"/>
<rect x="53" y="340" width="1" height="1" fill="#a0a0a0"/>
<rect x="53" y="342" width="1" height="1" fill="#a0a0a0"/>
<rect x="53" y="344" width="1" height="1" fill="#a0a0a0"/>
<rect x="53" y="346" width="1" height="1" fill="#a0a0a0"/>
<rect x="53" y="348" width="1" height="1" fill="#a0a0a0"/>
<rect x="53" y="350" width="1" height="1" fill="#a0a0a0"/>
<rect x="53" y="352" width="1" height="1" fill="#a0a0a0"/>
<rect x="53" y="354" width="1" height="1" fill="#a0a0a0"/>
<rect x="53" y="356" width="1" height="1" fill="#a0a0a0"/>
<rect x="53" y="358" width="1" height="1" fill="#a0a0a0"/>
<rect x="53" y="360" width="1" height="1" fill="#a0a0a0"/>
<rect x="53" y="362" width="1" height="1" fill="#a0a0a0"/>
<rect x="53" y="364" width="1" height="1" fill="#a0a0a0"/>
<rect x="53" y="366" width="1" height="1" fill="#a0a0a0"/>
<rect x="53" y="368" width="1" height="1" fill="#a0a0a0"/>
<rect x="53" y="370" width="1" height="1" fill="#a0a0a0"/>
<rect x="53" y="372" width="1" height="1" fill="#a0a0a0"/>
<rect x="53" y="374" width="1" height="1" fill="#a0a0a0"/>
<rect x="53" y="376" width="1" height="1" fill="#a0a0a0"/>
<rect x="53" y="378" width="1" height="1" fill="#a0a0a0"/>
<rect x="53" y="380" width="1" height="1" fill="#a0a0a0"/>
<rect x="53" y="382" width="1" height="1" fill="#a0a0a0"/>
<rect x="53" y="384" width="1" height="1" fill="#a0a0a0"/>
<rect x="53" y="386" width="1" height="1" fill="#a0a0a0"/>
<rect x="53" y="388" width="1" height="1" fill="#a0a0a0"/>
<rect x="53" y="390" width="1" height="1" fill="#a0a0a0"/>
<rect x="53" y="392" width="1" height="1" fill="#a0a0a0"/>
<rect x="53" y="394" width="1" height="1" fill="#a0a0a0"/>
<rect x="53" y="396" width="1" height="1" fill="#a0a0a0"/>
<rect x="53" y="398" width="1" height="1" fill="#a0a0a0"/>
<rect x="53" y="400" width="1" height="1" fill="#a0a0a0"/>
<rect x="53" y="402" width="1" height="1" fill="#a0a0a0"/>
<rect x="53" y="404" width="1" height="1" fill="#a0a0a0"/>
<rect x="53" y="406" width="1" height="1" fill="#a0a0a0"/>
<rect x="53" y="408" width="1" height="1" fill="#a0a0a0"/>
<rect x="53" y="410" width="1" height="1" fill="#a0a0a0"/>
<rect x="53" y="412" width="1" height="1" fill="#a0a0a0"/>
<rect x="53" y="414" width="1" height="1" fill="#a0a0a0"/>
<rect x="53" y="416" width="1" height="1" fill="#a0a0a0"/>
<rect x="53" y="418" width="1" height="1" fill="#a0a0a0"/>
<rect x="53" y="420" width="1" height="1" fill="#a0a0a0"/>
<rect x="53" y="422" width="1" height="1" fill="#a0a0a0"/>
<rect x="53" y="424" width="1" height="1" fill="#a0a0a0"/>
<rect x="53" y="426" width="1" height="1" fill="#a0a0a0"/>
<rect x="53" y="428" width="1" height="1" fill="#a0a0a0"/>
<rect x="53" y="430" width="1" height="1" fill="#a0a0a0"/>
<rect x="53" y="432" width="1" height="1" fill="#a0a0a0"/>
<rect x="53" y="434" width="1" height="1" fill="#a0a0a0"/>
<rect x="53" y="436" width="1" height="1" fill="#a0a0a0"/>
<rect x="53" y="438" width="1" height="1" fill="#a0a0a0"/>
<rect x="53" y="440" width="1" height="1" fill="#a0a0a0"/>
<rect x="53" y="442" width="1" height="1" fill="#a0a0a0"/>
<rect x="53" y="444" width="1" height="1" fill="#a0a0a0"/>
<rect x="53" y="446" width="1" height="1" fill="#a0a0a0"/>
<rect x="53" y="448" width="1" height="1" fill="#a0a0a0"/>
<rect x="53" y="450" width="1" height="1" fill="#a0a0a0"/>
<rect x="53" y="452" width="1" height="1" fill="#a0a0a0"/>
<rect x="53" y="454" width="1" height="1" fill="#a0a0a0"/>
<rect x="53" y="456" width="1" height="1" fill="#a0a0a0"/>
<rect x="53" y="458" width="1" height="1" fill="#a0a0a0"/>
<rect x="53" y="460" width="1" height="1" fill="#a0a0a0"/>
<rect x="53" y="462" width="1" height="1" fill="#a0a0a0"/>
<rect x="53" y="464" width="1" height="1" fill="#a0a0a0"/>
<rect x="53" y="466" width="1" height="1" fill="#a0a0a0"/>
<rect x="53" y="468" width="1" height="1" fill="#a0a0a0"/>
<rect x="53" y="470" width="1" height="1" fill="#a0a0a0"/>
<rect x="53" y="472" width="1" height="1" fill="#a0a0a0"/>
<rect x="53" y="474" width="1" height="1" fill="#a0a0a0"/>
<rect x="53" y="476" width="1" height="1" fill="#a0a0a0"/>
<rect x="53" y="478" width="1" height="1" fill="#a0a0a0"/>
<rect x="53" y="480" width="1" height="1" fill="#a0a0a0"/>
<rect x="53" y="482" width="1" height="1" fill="#a0a0a0"/>
<rect x="53" y="484" width="1" height="1" fill="#a0a0a0"/>
<rect x="53" y="486" width="1" height="1" fill="#a0a0a0"/>
<rect x="53" y="488" width="1" height="1" fill="#a0a0a0"/>
<rect x="53" y="490" width="1" height="1" fill="#a0a0a0"/>
<rect x="53" y="492" width="1" height="1" fill="#a0a0a0"/>
<rect x="53" y="494" width="1" height="1" fill="#a0a0a0"/>
<rect x="53" y="496" width="1" height="1" fill="#a0a0a0"/>
<rect x="53" y="498" width="1" height="1" fill="#a0a0a0"/>
<rect x="53" y="500" width="1" height="1" fill="#a0a0a0"/>
<rect x="53" y="502" width="1" height="1" fill="#a0a0a0"/>
<rect x="53" y="504" width="1" height="1" fill="#a0a0a0"/>
<rect x="53" y="506" width="1" height="1" fill="#a0a0a0"/>
<rect x="53" y="508" width="1" height="1" fill="#a0a0a0"/>
<rect x="53" y="510" width="1" height="1" fill="#a0a0a0"/>
<rect x="73" y="184" width="1" height="1" fill="#a0a0a0"/>
<rect x="73" y="186" width="1" height="1" fill="#a0a0a0"/>
<rect x="73" y="188" width="1" height="1" fill="#a0a0a0"/>
<rect x="73" y="190" width="1" height="1" fill="#a0a0a0"/>
<rect x="73" y="192" width="1" height="1" fill="#a0a0a0"/>
<rect x="73" y="194" width="1" height="1" fill="#a0a0a0"/>
<rect x="73" y="196" width="1" height="1" fill="#a0a0a0"/>
<rect x="73" y="198" width="1" height="1" fill="#a0a0a0"/>
<rect x="73" y="200" width="1" height="1" fill="#a0a0a0"/>
<rect x="73" y="202" width="1" height="1" fill="#a0a0a0"/>
<rect x="73" y="204" width="1" height="1" fill="#a0a0a0"/>
<rect x="73" y="206" width="1" height="1" fill="#a0a0a0"/>
<rect x="73" y="208" width="1" height="1" fill="#a0a0a0"/>
<rect x="73" y="210" width="1" height="1" fill="#a0a0a0"/>
<rect x="73" y="212" width="1" height="1" fill="#a0a0a0"/>
<rect x="73" y="214" width="1" height="1" fill="#a0a0a0"/>
<rect x="73" y="216" width="1" height="1" fill="#a0a0a0"/>
<rect x="73" y="218" width="1" height="1" fill="#a0a0a0"/>
<rect x="73" y="220" width="1" height="1" fill="#a0a0a0"/>
<rect x="73" y="222" width="1" height="1" fill="#a0a0a0"/>
<rect x="73" y="224" width="1" height="1" fill="#a0a0a0"/>
<rect x="73" y="226" width="1" height="1" fill="#a0a0a0"/>
<rect x="73" y="228" width="1" height="1" fill="#a0a0a0"/>
<rect x="73" y="230" width="1" height="1" fill="#a0a0a0"/>
<rect x="73" y="344" width="1" height="1" fill="#a0a0a0"/>
<rect x="73" y="346" width="1" height="1" fill="#a0a0a0"/>
<rect x="73" y="348" width="1" height="1" fill="#a0a0a0"/>
<rect x="73" y="350" width="1" height="1" fill="#a0a0a0"/>
<rect x="73" y="352" width="1" height="1" fill="#a0a0a0"/>
<rect x="73" y="354" width="1" height="1" fill="#a0a0a0"/>
<rect x="73" y="356" width="1" height="1" fill="#a0a0a0"/>
<rect x="73" y="358" width="1" height="1" fill="#a0a0a0"/>
<rect x="73" y="360" width="1" height="1" fill="#a0a0a0"/>
<rect x="73" y="362" width="1" height="1" fill="#a0a0a0"/>
<rect x="73" y="364" width="1" height="1" fill="#a0a0a0"/>
<rect x="73" y="366" width="1" height="1" fill="#a0a0a0"/>
<rect x="73" y="368" width="1" height="1" fill="#a0a0a0"/>
<rect x="73" y="370" width="1" height="1" fill="#a0a0a0"/>
<rect x="73" y="372" width="1" height="1" fill="#a0a0a0"/>
<rect x="73" y="374" width="1" height="1" fill="#a0a0a0"/>
<rect x="73" y="376" width="1" height="1" fill="#a0a0a0"/>
<rect x="73" y="378" width="1" height="1" fill="#a0a0a0"/>
<rect x="73" y="380" width="1" height="1" fill="#a0a0a0"/>
<rect x="73" y="382" width="1" height="1" fill="#a0a0a0"/>
<rect x="73" y="384" width="1" height="1" fill="#a0a0a0"/>
<rect x="73" y="386" width="1" height="1" fill="#a0a0a0"/>
<rect x="73" y="388" width="1" height="1" fill="#a0a0a0"/>
<rect x="73" y="390" width="1" height="1" fill="#a0a0a0"/>
<rect x="73" y="392" width="1" height="1" fill="#a0a0a0"/>
<rect x="73" y="394" width="1" height="1" fill="#a0a0a0"/>
<rect x="73" y="396" width="1" height="1" fill="#a0a0a0"/>
<rect x="73" y="398" width="1" height="1" fill="#a0a0a0"/>
<rect x="73" y="400" width="1" height="1" fill="#a0a0a0"/>
<rect x="73" y="402" width="1" height="1" fill="#a0a0a0"/>
<rect x="73" y="404" width="1" height="1" fill="#a0a0a0"/>
<rect x="73" y="406" width="1" height="1" fill="#a0a0a0"/>
<rect x="73" y="408" width="1" height="1" fill="#a0a0a0"/>
<rect x="73" y="410" width="1" height="1" fill="#a0a0a0"/>
<rect x="73" y="412" width="1" height="1" fill="#a0a0a0"/>
<rect x="73" y="414" width="1" height="1" fill="#a0a0a0"/>
<rect x="73" y="416" width="1" height="1" fill="#a0a0a0"/>
<rect x="73" y="418" width="1" height="1" fill="#a0a0a0"/>
<rect x="73" y="420" width="1" height="1" fill="#a0a0a0"/>
<rect x="73" y="422" width="1" height="1" fill="#a0a0a0"/>
<rect x="73" y="424" width="1" height="1" fill="#a0a0a0"/>
<rect x="73" y="426" width="1" height="1" fill="#a0a0a0"/>
<rect x="73" y="428" width="1" height="1" fill="#a0a0a0"/>
<rect x="73" y="430" width="1" height="1" fill="#a0a0a0"/>
<rect x="73" y="432" width="1" height="1" fill="#a0a0a0"/>
<rect x="73" y="434" width="1" height="1" fill="#a0a0a0"/>
<rect x="73" y="436" width="1" height="1" fill="#a0a0a0"/>
<rect x="73" y="438" width="1" height="1" fill="#a0a0a0"/>
<rect x="73" y="440" width="1" height="1" fill="#a0a0a0"/>
<rect x="73" y="442" width="1" height="1" fill="#a0a0a0"/>
<rect x="73" y="444" width="1" height="1" fill="#a0a0a0"/>
<rect x="73" y="446" width="1" height="1" fill="#a0a0a0"/>
<rect x="73" y="448" width="1" height="1" fill="#a0a0a0"/>
<rect x="73" y="450" width="1" height="1" fill="#a0a0a0"/>
<rect x="73" y="452" width="1" height="1" fill="#a0a0a0"/>
<rect x="73" y="454" width="1" height="1" fill="#a0a0a0"/>
<rect x="73" y="456" width="1" height="1" fill="#a0a0a0"/>
<rect x="73" y="458" width="1" height="1" fill="#a0a0a0"/>
<rect x="73" y="460" width="1" height="1" fill="#a0a0a0"/>
<rect x="73" y="462" width="1" height="1" fill="#a0a0a0"/>
<rect x="73" y="464" width="1" height="1" fill="#a0a0a0"/>
<rect x="73" y="466" width="1" height="1" fill="#a0a0a0"/>
<rect x="73" y="468" width="1" height="1" fill="#a0a0a0"/>
<rect x="73" y="470" width="1" height="1" fill="#a0a0a0"/>
<rect x="73" y="472" width="1" height="1" fill="#a0a0a0"/>
<rect x="73" y="474" width="1" height="1" fill="#a0a0a0"/>
<rect x="73" y="476" width="1" height="1" fill="#a0a0a0"/>
<rect x="73" y="478" width="1" height="1" fill="#a0a0a0"/>
<rect x="73" y="480" width="1" height="1" fill="#a0a0a0"/>
<rect x="73" y="482" width="1" height="1" fill="#a0a0a0"/>
<rect x="73" y="484" width="1" height="1" fill="#a0a0a0"/>
<rect x="73" y="486" width="1" height="1" fill="#a0a0a0"/>
<rect x="73" y="488" width="1" height="1" fill="#a0a0a0"/>
<rect x="73" y="490" width="1" height="1" fill="#a0a0a0"/>
<rect x="73" y="504" width="1" height="1" fill="#a0a0a0"/>
<rect x="73" y="506" width="1" height="1" fill="#a0a0a0"/>
<rect x="73" y="508" width="1" height="1" fill="#a0a0a0"/>
<rect x="73" y="510" width="1" height="1" fill="#a0a0a0"/>
<rect x="73" y="512" width="1" height="1" fill="#a0a0a0"/>
<rect x="73" y="514" width="1" height="1" fill="#a0a0a0"/>
<rect x="9.5" y="130.5" width="8" height="8" rx="1" fill="#f4f4f4" stroke="#8a8a8a" stroke-width="1"/>
<rect x="11" y="134" width="5" height="1" fill="#3050a0"/>
<rect x="19" y="134" width="1" height="1" fill="#a0a0a0"/>
<rect x="21" y="134" width="1" height="1" fill="#a0a0a0"/>
<rect x="23" y="134" width="1" height="1" fill="#a0a0a0"/>
<rect x="25" y="134" width="1" height="1" fill="#a0a0a0"/>
<path d="M23 129.4 L27.9 125 L31.8 127.3 L26.4 132.5 Z" fill="#f0c040" stroke="#c08a10" stroke-width="0.8"/>
<path d="M31.5 130 L35.5 126.8 L38.3 129.5 L34.5 133 Z" fill="#f090f0" stroke="#b040b0" stroke-width="0.8"/>
<path d="M31.5 136 L35.5 133.3 L38.3 135.5 L34.5 139 Z" fill="#80b0f0" stroke="#2050b0" stroke-width="0.8"/>
<path d="M30.5 130 V136.5 H32" fill="none" stroke="#607090" stroke-width="1"/><path d="M30.5 130 H32" stroke="#607090" stroke-width="1"/>
<rect x="29.5" y="150.5" width="8" height="8" rx="1" fill="#f4f4f4" stroke="#8a8a8a" stroke-width="1"/>
<rect x="31" y="154" width="5" height="1" fill="#3050a0"/>
<rect x="39" y="154" width="1" height="1" fill="#a0a0a0"/>
<rect x="41" y="154" width="1" height="1" fill="#a0a0a0"/>
<rect x="43" y="154" width="1" height="1" fill="#a0a0a0"/>
<rect x="45" y="154" width="1" height="1" fill="#a0a0a0"/>
<path d="M44.5 159 V148.5 H45.5 V147.5 H50 L51 149.5 H56.8 V151.5" fill="#f6e48c" stroke="#7a6a40" stroke-width="1"/>
<rect x="45" y="149" width="11.5" height="10" fill="#f6e48c"/>
<path d="M44.5 159 L47.8 151.8 H58.8 L56.3 159 Z" fill="url(#fo)" stroke="#6a5a30" stroke-width="1"/>
<path d="M45 159.2 H56.3" stroke="#201808" stroke-width="1"/>
<rect x="43" y="153" width="7" height="7" fill="#fff"/>
<rect x="44" y="153" width="1" height="1" fill="#000"/><rect x="45" y="153" width="1" height="1" fill="#000"/><rect x="47" y="153" width="1" height="1" fill="#000"/><rect x="48" y="153" width="1" height="1" fill="#000"/><rect x="43" y="154" width="1" height="1" fill="#000"/><rect x="45" y="154" width="1" height="1" fill="#000"/><rect x="47" y="154" width="1" height="1" fill="#000"/><rect x="49" y="154" width="1" height="1" fill="#000"/><rect x="43" y="155" width="1" height="1" fill="#000"/><rect x="44" y="155" width="1" height="1" fill="#000"/><rect x="46" y="155" width="1" height="1" fill="#000"/><rect x="48" y="155" width="1" height="1" fill="#000"/><rect x="49" y="155" width="1" height="1" fill="#000"/><rect x="44" y="156" width="1" height="1" fill="#000"/><rect x="46" y="156" width="1" height="1" fill="#000"/><rect x="48" y="156" width="1" height="1" fill="#000"/><rect x="43" y="157" width="1" height="1" fill="#000"/><rect x="44" y="157" width="1" height="1" fill="#000"/><rect x="46" y="157" width="1" height="1" fill="#000"/><rect x="48" y="157" width="1" height="1" fill="#000"/><rect x="49" y="157" width="1" height="1" fill="#000"/><rect x="43" y="158" width="1" height="1" fill="#000"/><rect x="45" y="158" width="1" height="1" fill="#000"/><rect x="47" y="158" width="1" height="1" fill="#000"/><rect x="49" y="158" width="1" height="1" fill="#000"/><rect x="44" y="159" width="1" height="1" fill="#000"/><rect x="45" y="159" width="1" height="1" fill="#000"/><rect x="47" y="159" width="1" height="1" fill="#000"/><rect x="48" y="159" width="1" height="1" fill="#000"/>
<rect x="49.5" y="170.5" width="8" height="8" rx="1" fill="#f4f4f4" stroke="#8a8a8a" stroke-width="1"/>
<rect x="51" y="174" width="5" height="1" fill="#3050a0"/>
<rect x="59" y="174" width="1" height="1" fill="#a0a0a0"/>
<rect x="61" y="174" width="1" height="1" fill="#a0a0a0"/>
<rect x="63" y="174" width="1" height="1" fill="#a0a0a0"/>
<rect x="65" y="174" width="1" height="1" fill="#a0a0a0"/>
<path d="M64.5 179 V168.5 H65.5 V167.5 H70 L71 169.5 H76.8 V171.5" fill="#f6e48c" stroke="#7a6a40" stroke-width="1"/>
<rect x="65" y="169" width="11.5" height="10" fill="#f6e48c"/>
<path d="M64.5 179 L67.8 171.8 H78.8 L76.3 179 Z" fill="url(#fo)" stroke="#6a5a30" stroke-width="1"/>
<path d="M65 179.2 H76.3" stroke="#201808" stroke-width="1"/>
<rect x="69.5" y="190.5" width="8" height="8" rx="1" fill="#f4f4f4" stroke="#8a8a8a" stroke-width="1"/>
<rect x="71" y="194" width="5" height="1" fill="#3050a0"/>
<rect x="73" y="192" width="1" height="5" fill="#3050a0"/>
<rect x="79" y="194" width="1" height="1" fill="#a0a0a0"/>
<rect x="81" y="194" width="1" height="1" fill="#a0a0a0"/>
<rect x="83" y="194" width="1" height="1" fill="#a0a0a0"/>
<rect x="85" y="194" width="1" height="1" fill="#a0a0a0"/>
<path d="M85.5 185.5 H93.5 L96.5 188.5 V199.5 H85.5 Z" fill="url(#fg)" stroke="#7088b8" stroke-width="1"/>
<path d="M96.5 188.5 V199.5 H85.5" fill="none" stroke="#2c4478" stroke-width="1"/>
<path d="M93.5 185.5 V188.5 H96.5" fill="#ffffff" stroke="#405890" stroke-width="0.8"/>
<rect x="87" y="187" width="1" height="1" fill="#b4b4b4"/>
<rect x="88" y="188" width="1" height="1" fill="#b4b4b4"/>
<rect x="87" y="189" width="1" height="1" fill="#b4b4b4"/>
<rect x="89" y="189" width="1" height="1" fill="#b4b4b4"/>
<rect x="88" y="190" width="1" height="1" fill="#b4b4b4"/>
<rect x="90" y="190" width="1" height="1" fill="#b4b4b4"/>
<rect x="87" y="191" width="1" height="1" fill="#b4b4b4"/>
<rect x="89" y="191" width="1" height="1" fill="#b4b4b4"/>
<rect x="91" y="191" width="1" height="1" fill="#b4b4b4"/>
<rect x="88" y="192" width="1" height="1" fill="#b4b4b4"/>
<rect x="90" y="192" width="1" height="1" fill="#b4b4b4"/>
<rect x="92" y="192" width="1" height="1" fill="#b4b4b4"/>
<rect x="87" y="193" width="1" height="1" fill="#b4b4b4"/>
<rect x="89" y="193" width="1" height="1" fill="#b4b4b4"/>
<rect x="91" y="193" width="1" height="1" fill="#b4b4b4"/>
<rect x="88" y="194" width="1" height="1" fill="#b4b4b4"/>
<rect x="90" y="194" width="1" height="1" fill="#b4b4b4"/>
<rect x="87" y="195" width="1" height="1" fill="#b4b4b4"/>
<rect x="89" y="195" width="1" height="1" fill="#b4b4b4"/>
<rect x="88" y="196" width="1" height="1" fill="#b4b4b4"/>
<rect x="87" y="197" width="1" height="1" fill="#b4b4b4"/>
<rect x="69.5" y="210.5" width="8" height="8" rx="1" fill="#f4f4f4" stroke="#8a8a8a" stroke-width="1"/>
<rect x="71" y="214" width="5" height="1" fill="#3050a0"/>
<rect x="73" y="212" width="1" height="5" fill="#3050a0"/>
<rect x="79" y="214" width="1" height="1" fill="#a0a0a0"/>
<rect x="81" y="214" width="1" height="1" fill="#a0a0a0"/>
<rect x="83" y="214" width="1" height="1" fill="#a0a0a0"/>
<rect x="85" y="214" width="1" height="1" fill="#a0a0a0"/>
<path d="M85.5 205.5 H93.5 L96.5 208.5 V219.5 H85.5 Z" fill="url(#fg)" stroke="#7088b8" stroke-width="1"/>
<path d="M96.5 208.5 V219.5 H85.5" fill="none" stroke="#2c4478" stroke-width="1"/>
<path d="M93.5 205.5 V208.5 H96.5" fill="#ffffff" stroke="#405890" stroke-width="0.8"/>
<rect x="87" y="207" width="1" height="1" fill="#b4b4b4"/>
<rect x="88" y="208" width="1" height="1" fill="#b4b4b4"/>
<rect x="87" y="209" width="1" height="1" fill="#b4b4b4"/>
<rect x="89" y="209" width="1" height="1" fill="#b4b4b4"/>
<rect x="88" y="210" width="1" height="1" fill="#b4b4b4"/>
<rect x="90" y="210" width="1" height="1" fill="#b4b4b4"/>
<rect x="87" y="211" width="1" height="1" fill="#b4b4b4"/>
<rect x="89" y="211" width="1" height="1" fill="#b4b4b4"/>
<rect x="91" y="211" width="1" height="1" fill="#b4b4b4"/>
<rect x="88" y="212" width="1" height="1" fill="#b4b4b4"/>
<rect x="90" y="212" width="1" height="1" fill="#b4b4b4"/>
<rect x="92" y="212" width="1" height="1" fill="#b4b4b4"/>
<rect x="87" y="213" width="1" height="1" fill="#b4b4b4"/>
<rect x="89" y="213" width="1" height="1" fill="#b4b4b4"/>
<rect x="91" y="213" width="1" height="1" fill="#b4b4b4"/>
<rect x="88" y="214" width="1" height="1" fill="#b4b4b4"/>
<rect x="90" y="214" width="1" height="1" fill="#b4b4b4"/>
<rect x="87" y="215" width="1" height="1" fill="#b4b4b4"/>
<rect x="89" y="215" width="1" height="1" fill="#b4b4b4"/>
<rect x="88" y="216" width="1" height="1" fill="#b4b4b4"/>
<rect x="87" y="217" width="1" height="1" fill="#b4b4b4"/>
<rect x="69.5" y="230.5" width="8" height="8" rx="1" fill="#f4f4f4" stroke="#8a8a8a" stroke-width="1"/>
<rect x="71" y="234" width="5" height="1" fill="#3050a0"/>
<rect x="73" y="232" width="1" height="5" fill="#3050a0"/>
<rect x="79" y="234" width="1" height="1" fill="#a0a0a0"/>
<rect x="81" y="234" width="1" height="1" fill="#a0a0a0"/>
<rect x="83" y="234" width="1" height="1" fill="#a0a0a0"/>
<rect x="85" y="234" width="1" height="1" fill="#a0a0a0"/>
<path d="M85.5 225.5 H93.5 L96.5 228.5 V239.5 H85.5 Z" fill="url(#fg)" stroke="#7088b8" stroke-width="1"/>
<path d="M96.5 228.5 V239.5 H85.5" fill="none" stroke="#2c4478" stroke-width="1"/>
<path d="M93.5 225.5 V228.5 H96.5" fill="#ffffff" stroke="#405890" stroke-width="0.8"/>
<rect x="87" y="227" width="1" height="1" fill="#b4b4b4"/>
<rect x="88" y="228" width="1" height="1" fill="#b4b4b4"/>
<rect x="87" y="229" width="1" height="1" fill="#b4b4b4"/>
<rect x="89" y="229" width="1" height="1" fill="#b4b4b4"/>
<rect x="88" y="230" width="1" height="1" fill="#b4b4b4"/>
<rect x="90" y="230" width="1" height="1" fill="#b4b4b4"/>
<rect x="87" y="231" width="1" height="1" fill="#b4b4b4"/>
<rect x="89" y="231" width="1" height="1" fill="#b4b4b4"/>
<rect x="91" y="231" width="1" height="1" fill="#b4b4b4"/>
<rect x="88" y="232" width="1" height="1" fill="#b4b4b4"/>
<rect x="90" y="232" width="1" height="1" fill="#b4b4b4"/>
<rect x="92" y="232" width="1" height="1" fill="#b4b4b4"/>
<rect x="87" y="233" width="1" height="1" fill="#b4b4b4"/>
<rect x="89" y="233" width="1" height="1" fill="#b4b4b4"/>
<rect x="91" y="233" width="1" height="1" fill="#b4b4b4"/>
<rect x="88" y="234" width="1" height="1" fill="#b4b4b4"/>
<rect x="90" y="234" width="1" height="1" fill="#b4b4b4"/>
<rect x="87" y="235" width="1" height="1" fill="#b4b4b4"/>
<rect x="89" y="235" width="1" height="1" fill="#b4b4b4"/>
<rect x="88" y="236" width="1" height="1" fill="#b4b4b4"/>
<rect x="87" y="237" width="1" height="1" fill="#b4b4b4"/>
<rect x="49.5" y="250.5" width="8" height="8" rx="1" fill="#f4f4f4" stroke="#8a8a8a" stroke-width="1"/>
<rect x="51" y="254" width="5" height="1" fill="#3050a0"/>
<rect x="53" y="252" width="1" height="5" fill="#3050a0"/>
<rect x="59" y="254" width="1" height="1" fill="#a0a0a0"/>
<rect x="61" y="254" width="1" height="1" fill="#a0a0a0"/>
<rect x="63" y="254" width="1" height="1" fill="#a0a0a0"/>
<rect x="65" y="254" width="1" height="1" fill="#a0a0a0"/>
<path d="M64.5 259 V248.5 H65.5 V247.5 H70 L71 249.5 H77.5 V259 Z" fill="url(#fc)" stroke="#7a6a40" stroke-width="1"/>
<rect x="65.5" y="248.2" width="4.5" height="1.3" fill="#f8f0a0"/>
<path d="M65 259 H77.5 V250" fill="none" stroke="#302008" stroke-width="1"/>
<rect x="49.5" y="270.5" width="8" height="8" rx="1" fill="#f4f4f4" stroke="#8a8a8a" stroke-width="1"/>
<rect x="51" y="274" width="5" height="1" fill="#3050a0"/>
<rect x="53" y="272" width="1" height="5" fill="#3050a0"/>
<rect x="59" y="274" width="1" height="1" fill="#a0a0a0"/>
<rect x="61" y="274" width="1" height="1" fill="#a0a0a0"/>
<rect x="63" y="274" width="1" height="1" fill="#a0a0a0"/>
<rect x="65" y="274" width="1" height="1" fill="#a0a0a0"/>
<path d="M64.5 279 V268.5 H65.5 V267.5 H70 L71 269.5 H77.5 V279 Z" fill="url(#fc)" stroke="#7a6a40" stroke-width="1"/>
<rect x="65.5" y="268.2" width="4.5" height="1.3" fill="#f8f0a0"/>
<path d="M65 279 H77.5 V270" fill="none" stroke="#302008" stroke-width="1"/>
<rect x="49.5" y="290.5" width="8" height="8" rx="1" fill="#f4f4f4" stroke="#8a8a8a" stroke-width="1"/>
<rect x="51" y="294" width="5" height="1" fill="#3050a0"/>
<rect x="59" y="294" width="1" height="1" fill="#a0a0a0"/>
<rect x="61" y="294" width="1" height="1" fill="#a0a0a0"/>
<rect x="63" y="294" width="1" height="1" fill="#a0a0a0"/>
<rect x="65" y="294" width="1" height="1" fill="#a0a0a0"/>
<path d="M64.5 299 V288.5 H65.5 V287.5 H70 L71 289.5 H76.8 V291.5" fill="#f6e48c" stroke="#7a6a40" stroke-width="1"/>
<rect x="65" y="289" width="11.5" height="10" fill="#f6e48c"/>
<path d="M64.5 299 L67.8 291.8 H78.8 L76.3 299 Z" fill="url(#fo)" stroke="#6a5a30" stroke-width="1"/>
<path d="M65 299.2 H76.3" stroke="#201808" stroke-width="1"/>
<rect x="69.5" y="310.5" width="8" height="8" rx="1" fill="#f4f4f4" stroke="#8a8a8a" stroke-width="1"/>
<rect x="71" y="314" width="5" height="1" fill="#3050a0"/>
<rect x="73" y="312" width="1" height="5" fill="#3050a0"/>
<rect x="79" y="314" width="1" height="1" fill="#a0a0a0"/>
<rect x="81" y="314" width="1" height="1" fill="#a0a0a0"/>
<rect x="83" y="314" width="1" height="1" fill="#a0a0a0"/>
<rect x="85" y="314" width="1" height="1" fill="#a0a0a0"/>
<path d="M85.5 305.5 H93.5 L96.5 308.5 V319.5 H85.5 Z" fill="url(#fg)" stroke="#7088b8" stroke-width="1"/>
<path d="M96.5 308.5 V319.5 H85.5" fill="none" stroke="#2c4478" stroke-width="1"/>
<path d="M93.5 305.5 V308.5 H96.5" fill="#ffffff" stroke="#405890" stroke-width="0.8"/>
<rect x="87" y="307" width="1" height="1" fill="#b4b4b4"/>
<rect x="88" y="308" width="1" height="1" fill="#b4b4b4"/>
<rect x="87" y="309" width="1" height="1" fill="#b4b4b4"/>
<rect x="89" y="309" width="1" height="1" fill="#b4b4b4"/>
<rect x="88" y="310" width="1" height="1" fill="#b4b4b4"/>
<rect x="90" y="310" width="1" height="1" fill="#b4b4b4"/>
<rect x="87" y="311" width="1" height="1" fill="#b4b4b4"/>
<rect x="89" y="311" width="1" height="1" fill="#b4b4b4"/>
<rect x="91" y="311" width="1" height="1" fill="#b4b4b4"/>
<rect x="88" y="312" width="1" height="1" fill="#b4b4b4"/>
<rect x="90" y="312" width="1" height="1" fill="#b4b4b4"/>
<rect x="92" y="312" width="1" height="1" fill="#b4b4b4"/>
<rect x="87" y="313" width="1" height="1" fill="#b4b4b4"/>
<rect x="89" y="313" width="1" height="1" fill="#b4b4b4"/>
<rect x="91" y="313" width="1" height="1" fill="#b4b4b4"/>
<rect x="88" y="314" width="1" height="1" fill="#b4b4b4"/>
<rect x="90" y="314" width="1" height="1" fill="#b4b4b4"/>
<rect x="87" y="315" width="1" height="1" fill="#b4b4b4"/>
<rect x="89" y="315" width="1" height="1" fill="#b4b4b4"/>
<rect x="88" y="316" width="1" height="1" fill="#b4b4b4"/>
<rect x="87" y="317" width="1" height="1" fill="#b4b4b4"/>
<rect x="69.5" y="330.5" width="8" height="8" rx="1" fill="#f4f4f4" stroke="#8a8a8a" stroke-width="1"/>
<rect x="71" y="334" width="5" height="1" fill="#3050a0"/>
<rect x="73" y="332" width="1" height="5" fill="#3050a0"/>
<rect x="79" y="334" width="1" height="1" fill="#a0a0a0"/>
<rect x="81" y="334" width="1" height="1" fill="#a0a0a0"/>
<rect x="83" y="334" width="1" height="1" fill="#a0a0a0"/>
<rect x="85" y="334" width="1" height="1" fill="#a0a0a0"/>
<path d="M85.5 325.5 H93.5 L96.5 328.5 V339.5 H85.5 Z" fill="url(#fg)" stroke="#7088b8" stroke-width="1"/>
<path d="M96.5 328.5 V339.5 H85.5" fill="none" stroke="#2c4478" stroke-width="1"/>
<path d="M93.5 325.5 V328.5 H96.5" fill="#ffffff" stroke="#405890" stroke-width="0.8"/>
<rect x="87" y="327" width="1" height="1" fill="#b4b4b4"/>
<rect x="88" y="328" width="1" height="1" fill="#b4b4b4"/>
<rect x="87" y="329" width="1" height="1" fill="#b4b4b4"/>
<rect x="89" y="329" width="1" height="1" fill="#b4b4b4"/>
<rect x="88" y="330" width="1" height="1" fill="#b4b4b4"/>
<rect x="90" y="330" width="1" height="1" fill="#b4b4b4"/>
<rect x="87" y="331" width="1" height="1" fill="#b4b4b4"/>
<rect x="89" y="331" width="1" height="1" fill="#b4b4b4"/>
<rect x="91" y="331" width="1" height="1" fill="#b4b4b4"/>
<rect x="88" y="332" width="1" height="1" fill="#b4b4b4"/>
<rect x="90" y="332" width="1" height="1" fill="#b4b4b4"/>
<rect x="92" y="332" width="1" height="1" fill="#b4b4b4"/>
<rect x="87" y="333" width="1" height="1" fill="#b4b4b4"/>
<rect x="89" y="333" width="1" height="1" fill="#b4b4b4"/>
<rect x="91" y="333" width="1" height="1" fill="#b4b4b4"/>
<rect x="88" y="334" width="1" height="1" fill="#b4b4b4"/>
<rect x="90" y="334" width="1" height="1" fill="#b4b4b4"/>
<rect x="87" y="335" width="1" height="1" fill="#b4b4b4"/>
<rect x="89" y="335" width="1" height="1" fill="#b4b4b4"/>
<rect x="88" y="336" width="1" height="1" fill="#b4b4b4"/>
<rect x="87" y="337" width="1" height="1" fill="#b4b4b4"/>
<rect x="69.5" y="350.5" width="8" height="8" rx="1" fill="#f4f4f4" stroke="#8a8a8a" stroke-width="1"/>
<rect x="71" y="354" width="5" height="1" fill="#3050a0"/>
<rect x="73" y="352" width="1" height="5" fill="#3050a0"/>
<rect x="79" y="354" width="1" height="1" fill="#a0a0a0"/>
<rect x="81" y="354" width="1" height="1" fill="#a0a0a0"/>
<rect x="83" y="354" width="1" height="1" fill="#a0a0a0"/>
<rect x="85" y="354" width="1" height="1" fill="#a0a0a0"/>
<path d="M85.5 345.5 H93.5 L96.5 348.5 V359.5 H85.5 Z" fill="url(#fg)" stroke="#7088b8" stroke-width="1"/>
<path d="M96.5 348.5 V359.5 H85.5" fill="none" stroke="#2c4478" stroke-width="1"/>
<path d="M93.5 345.5 V348.5 H96.5" fill="#ffffff" stroke="#405890" stroke-width="0.8"/>
<rect x="87" y="347" width="1" height="1" fill="#b4b4b4"/>
<rect x="88" y="348" width="1" height="1" fill="#b4b4b4"/>
<rect x="87" y="349" width="1" height="1" fill="#b4b4b4"/>
<rect x="89" y="349" width="1" height="1" fill="#b4b4b4"/>
<rect x="88" y="350" width="1" height="1" fill="#b4b4b4"/>
<rect x="90" y="350" width="1" height="1" fill="#b4b4b4"/>
<rect x="87" y="351" width="1" height="1" fill="#b4b4b4"/>
<rect x="89" y="351" width="1" height="1" fill="#b4b4b4"/>
<rect x="91" y="351" width="1" height="1" fill="#b4b4b4"/>
<rect x="88" y="352" width="1" height="1" fill="#b4b4b4"/>
<rect x="90" y="352" width="1" height="1" fill="#b4b4b4"/>
<rect x="92" y="352" width="1" height="1" fill="#b4b4b4"/>
<rect x="87" y="353" width="1" height="1" fill="#b4b4b4"/>
<rect x="89" y="353" width="1" height="1" fill="#b4b4b4"/>
<rect x="91" y="353" width="1" height="1" fill="#b4b4b4"/>
<rect x="88" y="354" width="1" height="1" fill="#b4b4b4"/>
<rect x="90" y="354" width="1" height="1" fill="#b4b4b4"/>
<rect x="87" y="355" width="1" height="1" fill="#b4b4b4"/>
<rect x="89" y="355" width="1" height="1" fill="#b4b4b4"/>
<rect x="88" y="356" width="1" height="1" fill="#b4b4b4"/>
<rect x="87" y="357" width="1" height="1" fill="#b4b4b4"/>
<rect x="69.5" y="370.5" width="8" height="8" rx="1" fill="#f4f4f4" stroke="#8a8a8a" stroke-width="1"/>
<rect x="71" y="374" width="5" height="1" fill="#3050a0"/>
<rect x="73" y="372" width="1" height="5" fill="#3050a0"/>
<rect x="79" y="374" width="1" height="1" fill="#a0a0a0"/>
<rect x="81" y="374" width="1" height="1" fill="#a0a0a0"/>
<rect x="83" y="374" width="1" height="1" fill="#a0a0a0"/>
<rect x="85" y="374" width="1" height="1" fill="#a0a0a0"/>
<path d="M85.5 365.5 H93.5 L96.5 368.5 V379.5 H85.5 Z" fill="url(#fg)" stroke="#7088b8" stroke-width="1"/>
<path d="M96.5 368.5 V379.5 H85.5" fill="none" stroke="#2c4478" stroke-width="1"/>
<path d="M93.5 365.5 V368.5 H96.5" fill="#ffffff" stroke="#405890" stroke-width="0.8"/>
<rect x="87" y="367" width="1" height="1" fill="#b4b4b4"/>
<rect x="88" y="368" width="1" height="1" fill="#b4b4b4"/>
<rect x="87" y="369" width="1" height="1" fill="#b4b4b4"/>
<rect x="89" y="369" width="1" height="1" fill="#b4b4b4"/>
<rect x="88" y="370" width="1" height="1" fill="#b4b4b4"/>
<rect x="90" y="370" width="1" height="1" fill="#b4b4b4"/>
<rect x="87" y="371" width="1" height="1" fill="#b4b4b4"/>
<rect x="89" y="371" width="1" height="1" fill="#b4b4b4"/>
<rect x="91" y="371" width="1" height="1" fill="#b4b4b4"/>
<rect x="88" y="372" width="1" height="1" fill="#b4b4b4"/>
<rect x="90" y="372" width="1" height="1" fill="#b4b4b4"/>
<rect x="92" y="372" width="1" height="1" fill="#b4b4b4"/>
<rect x="87" y="373" width="1" height="1" fill="#b4b4b4"/>
<rect x="89" y="373" width="1" height="1" fill="#b4b4b4"/>
<rect x="91" y="373" width="1" height="1" fill="#b4b4b4"/>
<rect x="88" y="374" width="1" height="1" fill="#b4b4b4"/>
<rect x="90" y="374" width="1" height="1" fill="#b4b4b4"/>
<rect x="87" y="375" width="1" height="1" fill="#b4b4b4"/>
<rect x="89" y="375" width="1" height="1" fill="#b4b4b4"/>
<rect x="88" y="376" width="1" height="1" fill="#b4b4b4"/>
<rect x="87" y="377" width="1" height="1" fill="#b4b4b4"/>
<rect x="69.5" y="390.5" width="8" height="8" rx="1" fill="#f4f4f4" stroke="#8a8a8a" stroke-width="1"/>
<rect x="71" y="394" width="5" height="1" fill="#3050a0"/>
<rect x="73" y="392" width="1" height="5" fill="#3050a0"/>
<rect x="79" y="394" width="1" height="1" fill="#a0a0a0"/>
<rect x="81" y="394" width="1" height="1" fill="#a0a0a0"/>
<rect x="83" y="394" width="1" height="1" fill="#a0a0a0"/>
<rect x="85" y="394" width="1" height="1" fill="#a0a0a0"/>
<path d="M85.5 385.5 H93.5 L96.5 388.5 V399.5 H85.5 Z" fill="url(#fg)" stroke="#7088b8" stroke-width="1"/>
<path d="M96.5 388.5 V399.5 H85.5" fill="none" stroke="#2c4478" stroke-width="1"/>
<path d="M93.5 385.5 V388.5 H96.5" fill="#ffffff" stroke="#405890" stroke-width="0.8"/>
<rect x="87" y="387" width="1" height="1" fill="#b4b4b4"/>
<rect x="88" y="388" width="1" height="1" fill="#b4b4b4"/>
<rect x="87" y="389" width="1" height="1" fill="#b4b4b4"/>
<rect x="89" y="389" width="1" height="1" fill="#b4b4b4"/>
<rect x="88" y="390" width="1" height="1" fill="#b4b4b4"/>
<rect x="90" y="390" width="1" height="1" fill="#b4b4b4"/>
<rect x="87" y="391" width="1" height="1" fill="#b4b4b4"/>
<rect x="89" y="391" width="1" height="1" fill="#b4b4b4"/>
<rect x="91" y="391" width="1" height="1" fill="#b4b4b4"/>
<rect x="88" y="392" width="1" height="1" fill="#b4b4b4"/>
<rect x="90" y="392" width="1" height="1" fill="#b4b4b4"/>
<rect x="92" y="392" width="1" height="1" fill="#b4b4b4"/>
<rect x="87" y="393" width="1" height="1" fill="#b4b4b4"/>
<rect x="89" y="393" width="1" height="1" fill="#b4b4b4"/>
<rect x="91" y="393" width="1" height="1" fill="#b4b4b4"/>
<rect x="88" y="394" width="1" height="1" fill="#b4b4b4"/>
<rect x="90" y="394" width="1" height="1" fill="#b4b4b4"/>
<rect x="87" y="395" width="1" height="1" fill="#b4b4b4"/>
<rect x="89" y="395" width="1" height="1" fill="#b4b4b4"/>
<rect x="88" y="396" width="1" height="1" fill="#b4b4b4"/>
<rect x="87" y="397" width="1" height="1" fill="#b4b4b4"/>
<rect x="69.5" y="410.5" width="8" height="8" rx="1" fill="#f4f4f4" stroke="#8a8a8a" stroke-width="1"/>
<rect x="71" y="414" width="5" height="1" fill="#3050a0"/>
<rect x="73" y="412" width="1" height="5" fill="#3050a0"/>
<rect x="79" y="414" width="1" height="1" fill="#a0a0a0"/>
<rect x="81" y="414" width="1" height="1" fill="#a0a0a0"/>
<rect x="83" y="414" width="1" height="1" fill="#a0a0a0"/>
<rect x="85" y="414" width="1" height="1" fill="#a0a0a0"/>
<path d="M85.5 405.5 H93.5 L96.5 408.5 V419.5 H85.5 Z" fill="url(#fg)" stroke="#7088b8" stroke-width="1"/>
<path d="M96.5 408.5 V419.5 H85.5" fill="none" stroke="#2c4478" stroke-width="1"/>
<path d="M93.5 405.5 V408.5 H96.5" fill="#ffffff" stroke="#405890" stroke-width="0.8"/>
<rect x="87" y="407" width="1" height="1" fill="#b4b4b4"/>
<rect x="88" y="408" width="1" height="1" fill="#b4b4b4"/>
<rect x="87" y="409" width="1" height="1" fill="#b4b4b4"/>
<rect x="89" y="409" width="1" height="1" fill="#b4b4b4"/>
<rect x="88" y="410" width="1" height="1" fill="#b4b4b4"/>
<rect x="90" y="410" width="1" height="1" fill="#b4b4b4"/>
<rect x="87" y="411" width="1" height="1" fill="#b4b4b4"/>
<rect x="89" y="411" width="1" height="1" fill="#b4b4b4"/>
<rect x="91" y="411" width="1" height="1" fill="#b4b4b4"/>
<rect x="88" y="412" width="1" height="1" fill="#b4b4b4"/>
<rect x="90" y="412" width="1" height="1" fill="#b4b4b4"/>
<rect x="92" y="412" width="1" height="1" fill="#b4b4b4"/>
<rect x="87" y="413" width="1" height="1" fill="#b4b4b4"/>
<rect x="89" y="413" width="1" height="1" fill="#b4b4b4"/>
<rect x="91" y="413" width="1" height="1" fill="#b4b4b4"/>
<rect x="88" y="414" width="1" height="1" fill="#b4b4b4"/>
<rect x="90" y="414" width="1" height="1" fill="#b4b4b4"/>
<rect x="87" y="415" width="1" height="1" fill="#b4b4b4"/>
<rect x="89" y="415" width="1" height="1" fill="#b4b4b4"/>
<rect x="88" y="416" width="1" height="1" fill="#b4b4b4"/>
<rect x="87" y="417" width="1" height="1" fill="#b4b4b4"/>
<rect x="69.5" y="430.5" width="8" height="8" rx="1" fill="#f4f4f4" stroke="#8a8a8a" stroke-width="1"/>
<rect x="71" y="434" width="5" height="1" fill="#3050a0"/>
<rect x="73" y="432" width="1" height="5" fill="#3050a0"/>
<rect x="79" y="434" width="1" height="1" fill="#a0a0a0"/>
<rect x="81" y="434" width="1" height="1" fill="#a0a0a0"/>
<rect x="83" y="434" width="1" height="1" fill="#a0a0a0"/>
<rect x="85" y="434" width="1" height="1" fill="#a0a0a0"/>
<path d="M85.5 425.5 H93.5 L96.5 428.5 V439.5 H85.5 Z" fill="url(#fg)" stroke="#7088b8" stroke-width="1"/>
<path d="M96.5 428.5 V439.5 H85.5" fill="none" stroke="#2c4478" stroke-width="1"/>
<path d="M93.5 425.5 V428.5 H96.5" fill="#ffffff" stroke="#405890" stroke-width="0.8"/>
<rect x="87" y="427" width="1" height="1" fill="#b4b4b4"/>
<rect x="88" y="428" width="1" height="1" fill="#b4b4b4"/>
<rect x="87" y="429" width="1" height="1" fill="#b4b4b4"/>
<rect x="89" y="429" width="1" height="1" fill="#b4b4b4"/>
<rect x="88" y="430" width="1" height="1" fill="#b4b4b4"/>
<rect x="90" y="430" width="1" height="1" fill="#b4b4b4"/>
<rect x="87" y="431" width="1" height="1" fill="#b4b4b4"/>
<rect x="89" y="431" width="1" height="1" fill="#b4b4b4"/>
<rect x="91" y="431" width="1" height="1" fill="#b4b4b4"/>
<rect x="88" y="432" width="1" height="1" fill="#b4b4b4"/>
<rect x="90" y="432" width="1" height="1" fill="#b4b4b4"/>
<rect x="92" y="432" width="1" height="1" fill="#b4b4b4"/>
<rect x="87" y="433" width="1" height="1" fill="#b4b4b4"/>
<rect x="89" y="433" width="1" height="1" fill="#b4b4b4"/>
<rect x="91" y="433" width="1" height="1" fill="#b4b4b4"/>
<rect x="88" y="434" width="1" height="1" fill="#b4b4b4"/>
<rect x="90" y="434" width="1" height="1" fill="#b4b4b4"/>
<rect x="87" y="435" width="1" height="1" fill="#b4b4b4"/>
<rect x="89" y="435" width="1" height="1" fill="#b4b4b4"/>
<rect x="88" y="436" width="1" height="1" fill="#b4b4b4"/>
<rect x="87" y="437" width="1" height="1" fill="#b4b4b4"/>
<rect x="69.5" y="450.5" width="8" height="8" rx="1" fill="#f4f4f4" stroke="#8a8a8a" stroke-width="1"/>
<rect x="71" y="454" width="5" height="1" fill="#3050a0"/>
<rect x="73" y="452" width="1" height="5" fill="#3050a0"/>
<rect x="79" y="454" width="1" height="1" fill="#a0a0a0"/>
<rect x="81" y="454" width="1" height="1" fill="#a0a0a0"/>
<rect x="83" y="454" width="1" height="1" fill="#a0a0a0"/>
<rect x="85" y="454" width="1" height="1" fill="#a0a0a0"/>
<path d="M85.5 445.5 H93.5 L96.5 448.5 V459.5 H85.5 Z" fill="url(#fg)" stroke="#7088b8" stroke-width="1"/>
<path d="M96.5 448.5 V459.5 H85.5" fill="none" stroke="#2c4478" stroke-width="1"/>
<path d="M93.5 445.5 V448.5 H96.5" fill="#ffffff" stroke="#405890" stroke-width="0.8"/>
<rect x="87" y="447" width="1" height="1" fill="#b4b4b4"/>
<rect x="88" y="448" width="1" height="1" fill="#b4b4b4"/>
<rect x="87" y="449" width="1" height="1" fill="#b4b4b4"/>
<rect x="89" y="449" width="1" height="1" fill="#b4b4b4"/>
<rect x="88" y="450" width="1" height="1" fill="#b4b4b4"/>
<rect x="90" y="450" width="1" height="1" fill="#b4b4b4"/>
<rect x="87" y="451" width="1" height="1" fill="#b4b4b4"/>
<rect x="89" y="451" width="1" height="1" fill="#b4b4b4"/>
<rect x="91" y="451" width="1" height="1" fill="#b4b4b4"/>
<rect x="88" y="452" width="1" height="1" fill="#b4b4b4"/>
<rect x="90" y="452" width="1" height="1" fill="#b4b4b4"/>
<rect x="92" y="452" width="1" height="1" fill="#b4b4b4"/>
<rect x="87" y="453" width="1" height="1" fill="#b4b4b4"/>
<rect x="89" y="453" width="1" height="1" fill="#b4b4b4"/>
<rect x="91" y="453" width="1" height="1" fill="#b4b4b4"/>
<rect x="88" y="454" width="1" height="1" fill="#b4b4b4"/>
<rect x="90" y="454" width="1" height="1" fill="#b4b4b4"/>
<rect x="87" y="455" width="1" height="1" fill="#b4b4b4"/>
<rect x="89" y="455" width="1" height="1" fill="#b4b4b4"/>
<rect x="88" y="456" width="1" height="1" fill="#b4b4b4"/>
<rect x="87" y="457" width="1" height="1" fill="#b4b4b4"/>
<rect x="69.5" y="470.5" width="8" height="8" rx="1" fill="#f4f4f4" stroke="#8a8a8a" stroke-width="1"/>
<rect x="71" y="474" width="5" height="1" fill="#3050a0"/>
<rect x="73" y="472" width="1" height="5" fill="#3050a0"/>
<rect x="79" y="474" width="1" height="1" fill="#a0a0a0"/>
<rect x="81" y="474" width="1" height="1" fill="#a0a0a0"/>
<rect x="83" y="474" width="1" height="1" fill="#a0a0a0"/>
<rect x="85" y="474" width="1" height="1" fill="#a0a0a0"/>
<path d="M85.5 465.5 H93.5 L96.5 468.5 V479.5 H85.5 Z" fill="url(#fg)" stroke="#7088b8" stroke-width="1"/>
<path d="M96.5 468.5 V479.5 H85.5" fill="none" stroke="#2c4478" stroke-width="1"/>
<path d="M93.5 465.5 V468.5 H96.5" fill="#ffffff" stroke="#405890" stroke-width="0.8"/>
<rect x="87" y="467" width="1" height="1" fill="#b4b4b4"/>
<rect x="88" y="468" width="1" height="1" fill="#b4b4b4"/>
<rect x="87" y="469" width="1" height="1" fill="#b4b4b4"/>
<rect x="89" y="469" width="1" height="1" fill="#b4b4b4"/>
<rect x="88" y="470" width="1" height="1" fill="#b4b4b4"/>
<rect x="90" y="470" width="1" height="1" fill="#b4b4b4"/>
<rect x="87" y="471" width="1" height="1" fill="#b4b4b4"/>
<rect x="89" y="471" width="1" height="1" fill="#b4b4b4"/>
<rect x="91" y="471" width="1" height="1" fill="#b4b4b4"/>
<rect x="88" y="472" width="1" height="1" fill="#b4b4b4"/>
<rect x="90" y="472" width="1" height="1" fill="#b4b4b4"/>
<rect x="92" y="472" width="1" height="1" fill="#b4b4b4"/>
<rect x="87" y="473" width="1" height="1" fill="#b4b4b4"/>
<rect x="89" y="473" width="1" height="1" fill="#b4b4b4"/>
<rect x="91" y="473" width="1" height="1" fill="#b4b4b4"/>
<rect x="88" y="474" width="1" height="1" fill="#b4b4b4"/>
<rect x="90" y="474" width="1" height="1" fill="#b4b4b4"/>
<rect x="87" y="475" width="1" height="1" fill="#b4b4b4"/>
<rect x="89" y="475" width="1" height="1" fill="#b4b4b4"/>
<rect x="88" y="476" width="1" height="1" fill="#b4b4b4"/>
<rect x="87" y="477" width="1" height="1" fill="#b4b4b4"/>
<rect x="69.5" y="490.5" width="8" height="8" rx="1" fill="#f4f4f4" stroke="#8a8a8a" stroke-width="1"/>
<rect x="71" y="494" width="5" height="1" fill="#3050a0"/>
<rect x="73" y="492" width="1" height="5" fill="#3050a0"/>
<rect x="79" y="494" width="1" height="1" fill="#a0a0a0"/>
<rect x="81" y="494" width="1" height="1" fill="#a0a0a0"/>
<rect x="83" y="494" width="1" height="1" fill="#a0a0a0"/>
<rect x="85" y="494" width="1" height="1" fill="#a0a0a0"/>
<path d="M85.5 485.5 H93.5 L96.5 488.5 V499.5 H85.5 Z" fill="url(#fg)" stroke="#7088b8" stroke-width="1"/>
<path d="M96.5 488.5 V499.5 H85.5" fill="none" stroke="#2c4478" stroke-width="1"/>
<path d="M93.5 485.5 V488.5 H96.5" fill="#ffffff" stroke="#405890" stroke-width="0.8"/>
<rect x="87" y="487" width="1" height="1" fill="#b4b4b4"/>
<rect x="88" y="488" width="1" height="1" fill="#b4b4b4"/>
<rect x="87" y="489" width="1" height="1" fill="#b4b4b4"/>
<rect x="89" y="489" width="1" height="1" fill="#b4b4b4"/>
<rect x="88" y="490" width="1" height="1" fill="#b4b4b4"/>
<rect x="90" y="490" width="1" height="1" fill="#b4b4b4"/>
<rect x="87" y="491" width="1" height="1" fill="#b4b4b4"/>
<rect x="89" y="491" width="1" height="1" fill="#b4b4b4"/>
<rect x="91" y="491" width="1" height="1" fill="#b4b4b4"/>
<rect x="88" y="492" width="1" height="1" fill="#b4b4b4"/>
<rect x="90" y="492" width="1" height="1" fill="#b4b4b4"/>
<rect x="92" y="492" width="1" height="1" fill="#b4b4b4"/>
<rect x="87" y="493" width="1" height="1" fill="#b4b4b4"/>
<rect x="89" y="493" width="1" height="1" fill="#b4b4b4"/>
<rect x="91" y="493" width="1" height="1" fill="#b4b4b4"/>
<rect x="88" y="494" width="1" height="1" fill="#b4b4b4"/>
<rect x="90" y="494" width="1" height="1" fill="#b4b4b4"/>
<rect x="87" y="495" width="1" height="1" fill="#b4b4b4"/>
<rect x="89" y="495" width="1" height="1" fill="#b4b4b4"/>
<rect x="88" y="496" width="1" height="1" fill="#b4b4b4"/>
<rect x="87" y="497" width="1" height="1" fill="#b4b4b4"/>
<rect x="49.5" y="510.5" width="8" height="8" rx="1" fill="#f4f4f4" stroke="#8a8a8a" stroke-width="1"/>
<rect x="51" y="514" width="5" height="1" fill="#3050a0"/>
<rect x="59" y="514" width="1" height="1" fill="#a0a0a0"/>
<rect x="61" y="514" width="1" height="1" fill="#a0a0a0"/>
<rect x="63" y="514" width="1" height="1" fill="#a0a0a0"/>
<rect x="65" y="514" width="1" height="1" fill="#a0a0a0"/>
<path d="M64.5 519 V508.5 H65.5 V507.5 H70 L71 509.5 H76.8 V511.5" fill="#f6e48c" stroke="#7a6a40" stroke-width="1"/>
<rect x="65" y="509" width="11.5" height="10" fill="#f6e48c"/>
<path d="M64.5 519 L67.8 511.8 H78.8 L76.3 519 Z" fill="url(#fo)" stroke="#6a5a30" stroke-width="1"/>
<path d="M65 519.2 H76.3" stroke="#201808" stroke-width="1"/>
<rect x="73" y="534" width="1" height="1" fill="#a0a0a0"/>
<rect x="75" y="534" width="1" height="1" fill="#a0a0a0"/>
<rect x="77" y="534" width="1" height="1" fill="#a0a0a0"/>
<rect x="79" y="534" width="1" height="1" fill="#a0a0a0"/>
<rect x="81" y="534" width="1" height="1" fill="#a0a0a0"/>
<rect x="83" y="534" width="1" height="1" fill="#a0a0a0"/>
<path d="M85.5 525.5 H93.5 L96.5 528.5 V539.5 H85.5 Z" fill="url(#fg)" stroke="#7088b8" stroke-width="1"/>
<path d="M96.5 528.5 V539.5 H85.5" fill="none" stroke="#2c4478" stroke-width="1"/>
<path d="M93.5 525.5 V528.5 H96.5" fill="#ffffff" stroke="#405890" stroke-width="0.8"/>
<path d="M810 125 L831 104.5 H905.5 Q907.5 104.5 907.5 106.5 V125" fill="#f6bb86" stroke="#a9a9a9" stroke-width="1"/>
<rect x="907" y="106" width="2" height="19" fill="#a8a8a8"/>
<path d="M812 125 L831.5 105.5 H905.5" fill="none" stroke="#ffffff" stroke-opacity="0.6" stroke-width="1"/>
<path d="M716 125 L737 104.5 H821.5 Q823.5 104.5 823.5 106.5 V125" fill="#b9a6dc" stroke="#a9a9a9" stroke-width="1"/>
<rect x="823" y="106" width="2" height="19" fill="#a8a8a8"/>
<path d="M718 125 L737.5 105.5 H821.5" fill="none" stroke="#ffffff" stroke-opacity="0.6" stroke-width="1"/>
<path d="M490 125 L511 104.5 H639.5 Q641.5 104.5 641.5 106.5 V125" fill="#c1cfa0" stroke="#a9a9a9" stroke-width="1"/>
<rect x="641" y="106" width="2" height="19" fill="#a8a8a8"/>
<path d="M492 125 L511.5 105.5 H639.5" fill="none" stroke="#ffffff" stroke-opacity="0.6" stroke-width="1"/>
<path d="M409 125 L430 104.5 H501.5 Q503.5 104.5 503.5 106.5 V125" fill="#fcd97a" stroke="#a9a9a9" stroke-width="1"/>
<rect x="503" y="106" width="2" height="19" fill="#a8a8a8"/>
<path d="M411 125 L430.5 105.5 H501.5" fill="none" stroke="#ffffff" stroke-opacity="0.6" stroke-width="1"/>
<path d="M629 125 L650 104.5 H727.5 Q729.5 104.5 729.5 106.5 V125" fill="#f0a0a0" stroke="#a9a9a9" stroke-width="1"/>
<rect x="729" y="106" width="2" height="19" fill="#a8a8a8"/>
<path d="M631 125 L650.5 105.5 H727.5" fill="none" stroke="#ffffff" stroke-opacity="0.6" stroke-width="1"/>
<path d="M433.5 107.5 H441.5 L444.5 110.5 V121.5 H433.5 Z" fill="url(#fg)" stroke="#7088b8" stroke-width="1"/>
<path d="M444.5 110.5 V121.5 H433.5" fill="none" stroke="#2c4478" stroke-width="1"/>
<path d="M441.5 107.5 V110.5 H444.5" fill="#ffffff" stroke="#405890" stroke-width="0.8"/>
<rect x="435" y="109" width="1" height="1" fill="#b4b4b4"/>
<rect x="436" y="110" width="1" height="1" fill="#b4b4b4"/>
<rect x="435" y="111" width="1" height="1" fill="#b4b4b4"/>
<rect x="437" y="111" width="1" height="1" fill="#b4b4b4"/>
<rect x="436" y="112" width="1" height="1" fill="#b4b4b4"/>
<rect x="438" y="112" width="1" height="1" fill="#b4b4b4"/>
<rect x="435" y="113" width="1" height="1" fill="#b4b4b4"/>
<rect x="437" y="113" width="1" height="1" fill="#b4b4b4"/>
<rect x="439" y="113" width="1" height="1" fill="#b4b4b4"/>
<rect x="436" y="114" width="1" height="1" fill="#b4b4b4"/>
<rect x="438" y="114" width="1" height="1" fill="#b4b4b4"/>
<rect x="440" y="114" width="1" height="1" fill="#b4b4b4"/>
<rect x="435" y="115" width="1" height="1" fill="#b4b4b4"/>
<rect x="437" y="115" width="1" height="1" fill="#b4b4b4"/>
<rect x="439" y="115" width="1" height="1" fill="#b4b4b4"/>
<rect x="436" y="116" width="1" height="1" fill="#b4b4b4"/>
<rect x="438" y="116" width="1" height="1" fill="#b4b4b4"/>
<rect x="435" y="117" width="1" height="1" fill="#b4b4b4"/>
<rect x="437" y="117" width="1" height="1" fill="#b4b4b4"/>
<rect x="436" y="118" width="1" height="1" fill="#b4b4b4"/>
<rect x="435" y="119" width="1" height="1" fill="#b4b4b4"/>
<path d="M514.5 107.5 H522.5 L525.5 110.5 V121.5 H514.5 Z" fill="url(#fg)" stroke="#7088b8" stroke-width="1"/>
<path d="M525.5 110.5 V121.5 H514.5" fill="none" stroke="#2c4478" stroke-width="1"/>
<path d="M522.5 107.5 V110.5 H525.5" fill="#ffffff" stroke="#405890" stroke-width="0.8"/>
<path d="M652.5 107.5 H660.5 L663.5 110.5 V121.5 H652.5 Z" fill="url(#fg)" stroke="#7088b8" stroke-width="1"/>
<path d="M663.5 110.5 V121.5 H652.5" fill="none" stroke="#2c4478" stroke-width="1"/>
<path d="M660.5 107.5 V110.5 H663.5" fill="#ffffff" stroke="#405890" stroke-width="0.8"/>
<path d="M741.5 107.5 H749.5 L752.5 110.5 V121.5 H741.5 Z" fill="url(#fg)" stroke="#7088b8" stroke-width="1"/>
<path d="M752.5 110.5 V121.5 H741.5" fill="none" stroke="#2c4478" stroke-width="1"/>
<path d="M749.5 107.5 V110.5 H752.5" fill="#ffffff" stroke="#405890" stroke-width="0.8"/>
<path d="M834.5 107.5 H842.5 L845.5 110.5 V121.5 H834.5 Z" fill="url(#fg)" stroke="#7088b8" stroke-width="1"/>
<path d="M845.5 110.5 V121.5 H834.5" fill="none" stroke="#2c4478" stroke-width="1"/>
<path d="M842.5 107.5 V110.5 H845.5" fill="#ffffff" stroke="#405890" stroke-width="0.8"/>
<rect x="670" y="122.5" width="55" height="2" fill="#000"/>
<path d="M1329 111.5 H1338 L1333.5 116.5 Z" fill="#000"/>
<path d="M1349.5 110.5 L1356.5 117.5 M1356.5 110.5 L1349.5 117.5" stroke="#000" stroke-width="1.6"/>
<rect x="478" y="142" width="1" height="546" fill="#808080"/>
<rect x="473.5" y="132.5" width="10" height="10" fill="#fff" stroke="#808080"/>
<rect x="476" y="137" width="6" height="1" fill="#606060"/>
<rect x="473.5" y="484.5" width="10" height="10" fill="#fff" stroke="#808080"/>
<rect x="476" y="489" width="6" height="1" fill="#606060"/>
<rect x="478" y="601" width="6" height="1" fill="#808080"/>
<path d="M1349 140 L1352.5 136 L1356 140" fill="none" stroke="#505050" stroke-width="2"/>
<path d="M1349 677 L1352.5 681 L1356 677" fill="none" stroke="#505050" stroke-width="2"/>
<path d="M420 692.5 L416 696 L420 699.5" fill="none" stroke="#505050" stroke-width="2"/>
<path d="M1334 692.5 L1338 696 L1334 699.5" fill="none" stroke="#505050" stroke-width="2"/>
<rect x="7.5" y="689.5" width="13" height="12" fill="#f4f8ff" stroke="#303850"/><rect x="8" y="690" width="12" height="2" fill="#4a70c0"/><path d="M10 694 V700 M10 694.5 H13 M11 696.5 H18 M11 698.5 H18 M10 700 H13" stroke="#b8c020" stroke-width="1"/>
<path d="M70 695 L77 688 L86 695 L79 702 Z" fill="#8a60e0" stroke="#6030c0" stroke-width="0.8"/><circle cx="80" cy="698" r="4" fill="#3060e0" stroke="#fff" stroke-width="0.8"/><text x="78" y="701" font-family="Liberation Sans" font-size="6" fill="#fff">?</text>
<rect x="126" y="690" width="1" height="15" fill="#c8c8c8"/><rect x="206" y="690" width="1" height="15" fill="#c8c8c8"/><rect x="286" y="690" width="1" height="15" fill="#c8c8c8"/>
<text x="133" y="699" font-family="Liberation Mono" font-size="11" fill="#101010" textLength="12" lengthAdjust="spacing">{}</text>
<text x="211.5" y="699" font-family="Liberation Mono" font-weight="bold" font-size="11" fill="#101010" textLength="8" lengthAdjust="spacingAndGlyphs">()</text><path d="M219 701 H224 M222 699 L225 701 L222 703" stroke="#2050d0" stroke-width="1.6" fill="none"/></svg>
<div class="cl" style="top:130px"><span style="color:#808000">#ifndef</span> __MOTOR_H_</div><div class="cl" style="top:146px"><span style="color:#808000">#define</span> __MOTOR_H_</div><div class="cl" style="top:162px"></div><div class="cl" style="top:178px"><span style="color:#808000">#include</span> <span style="color:#800080">&quot;stm32f10x.h&quot;</span></div><div class="cl" style="top:194px"></div><div class="cl" style="top:210px"><span style="color:#008000">//void MotorGPIO_Configuration(void);</span></div><div class="cl" style="top:226px"><span style="color:#008000">//void run(void);</span></div><div class="cl" style="top:242px"></div><div class="cl" style="top:258px"><span style="color:#0000ff">void</span> TIM4_PWM_Init(<span style="color:#0000ff">unsigned</span> <span style="color:#0000ff">short</span> arr,<span style="color:#0000ff">unsigned</span> <span style="color:#0000ff">short</span> psc);</div><div class="cl" style="top:274px"><span style="color:#0000ff">void</span> SetMotorSpeed(<span style="color:#0000ff">unsigned</span> <span style="color:#0000ff">char</span> ucChannel,<span style="color:#0000ff">signed</span> <span style="color:#0000ff">char</span> cSpeed);</div><div class="cl" style="top:290px"></div><div class="cl" style="top:306px"><span style="color:#0000ff">void</span> ZYSTM32_run(<span style="color:#0000ff">signed</span> <span style="color:#0000ff">char</span> speed,<span style="color:#0000ff">int</span> time);       <span style="color:#008000">//Forward Function</span></div><div class="cl" style="top:322px"><span style="color:#0000ff">void</span> ZYSTM32_brake(<span style="color:#0000ff">int</span> time);               <span style="color:#008000">//Brake Function</span></div><div class="cl" style="top:338px"><span style="color:#0000ff">void</span> ZYSTM32_Left(<span style="color:#0000ff">signed</span> <span style="color:#0000ff">char</span> speed,<span style="color:#0000ff">int</span> time);      <span style="color:#008000">//Left Turn Function</span></div><div class="cl" style="top:354px"><span style="color:#0000ff">void</span> ZYSTM32_Spin_Left(<span style="color:#0000ff">signed</span> <span style="color:#0000ff">char</span> speed,<span style="color:#0000ff">int</span> time); <span style="color:#008000">//Left rotation function void</span></div><div class="cl" style="top:370px"><span style="color:#0000ff">void</span> ZYSTM32_Right(<span style="color:#0000ff">signed</span> <span style="color:#0000ff">char</span> speed,<span style="color:#0000ff">int</span> time);     <span style="color:#008000">//Right turn function</span></div><div class="cl" style="top:386px"><span style="color:#0000ff">void</span> ZYSTM32_Spin_Right(<span style="color:#0000ff">signed</span> <span style="color:#0000ff">char</span> speed,<span style="color:#0000ff">int</span> time);<span style="color:#008000">//Right Rotation</span></div><div class="cl" style="top:402px"><span style="color:#0000ff">void</span> ZYSTM32_back(<span style="color:#0000ff">signed</span> <span style="color:#0000ff">char</span> speed,<span style="color:#0000ff">int</span> time);      <span style="color:#008000">//Back Function</span></div><div class="cl" style="top:418px"></div><div class="cl" style="top:434px"></div><div class="cl" style="top:450px"></div><div class="cl" style="top:466px"><span style="color:#008000">//Motor Drivr IO definition</span></div><div class="cl" style="top:482px"><span style="color:#008000">/*</span></div><div class="cl" style="top:498px"><span style="color:#008000">LEFT_MOTOR_GO   PB8 Left motor direction control</span></div><div class="cl" style="top:514px"><span style="color:#008000">LEFT_MOTOR_PWM  PB9 Left Motor PWM</span></div><div class="cl" style="top:530px"><span style="color:#008000"></span></div><div class="cl" style="top:546px"><span style="color:#008000">RIGHT_MOTOR_GO  PA6     Right Motor Direction Control</span></div><div class="cl" style="top:562px"><span style="color:#008000">RIGHT_MOTOR_PWM PB10    Right Motor PWM</span></div><div class="cl" style="top:578px"><span style="color:#008000"> */</span></div><div class="cl" style="top:594px"></div><div class="cl" style="top:610px"><span style="color:#808000">#define</span> LEFT_MOTOR_GO             GPIO_Pin_7</div><div class="cl" style="top:626px"><span style="color:#808000">#define</span> LEFT_MOTOR_GO_GPIO        GPIOB</div><div class="cl" style="top:642px"><span style="color:#808000">#define</span> LEFT_MOTOR_GO_SET         GPIO_SetBits(LEFT_MOTOR_GO_GPIO,LEFT_MOTOR_GO)</div><div class="cl" style="top:658px"><span style="color:#808000">#define</span> LEFT_MOTOR_GO_RESET       GPIO_ResetBits(LEFT_MOTOR_GO_GPIO,LEFT_MOTOR_GO)</div><div class="cl" style="top:674px"></div>
<div class="ln" style="top:130px">1</div><div class="ln" style="top:146px">2</div><div class="ln" style="top:162px">3</div><div class="ln" style="top:178px">4</div><div class="ln" style="top:194px">5</div><div class="ln" style="top:210px">6</div><div class="ln" style="top:226px">7</div><div class="ln" style="top:242px">8</div><div class="ln" style="top:258px">9</div><div class="ln" style="top:274px">10</div><div class="ln" style="top:290px">11</div><div class="ln" style="top:306px">12</div><div class="ln" style="top:322px">13</div><div class="ln" style="top:338px">14</div><div class="ln" style="top:354px">15</div><div class="ln" style="top:370px">16</div><div class="ln" style="top:386px">17</div><div class="ln" style="top:402px">18</div><div class="ln" style="top:418px">19</div><div class="ln" style="top:434px">20</div><div class="ln" style="top:450px">21</div><div class="ln" style="top:466px">22</div><div class="ln" style="top:482px">23</div><div class="ln" style="top:498px">24</div><div class="ln" style="top:514px">25</div><div class="ln" style="top:530px">26</div><div class="ln" style="top:546px">27</div><div class="ln" style="top:562px">28</div><div class="ln" style="top:578px">29</div><div class="ln" style="top:594px">30</div><div class="ln" style="top:610px">31</div><div class="ln" style="top:626px">32</div><div class="ln" style="top:642px">33</div><div class="ln" style="top:658px">34</div><div class="ln" style="top:674px">35</div>
<div class="tx" style="left:23.00px;top:6.14px;font-size:12px;color:#000;font-weight:normal;transform:scaleX(0.9970);">F:\tareq stm programming\7, intelligent car ultrasonic obstacle avoidance experiment (with steering gear)\USER\Template.uvprojx - µVision</div><div class="tx" style="left:9.50px;top:27.89px;font-size:11.5px;color:#000;font-weight:normal;transform:scaleX(0.9282);">File</div><div class="tx" style="left:42.30px;top:27.89px;font-size:11.5px;color:#000;font-weight:normal;transform:scaleX(0.9885);">Edit</div><div class="tx" style="left:77.10px;top:27.89px;font-size:11.5px;color:#000;font-weight:normal;transform:scaleX(1.0033);">View</div><div class="tx" style="left:117.10px;top:27.89px;font-size:11.5px;color:#000;font-weight:normal;transform:scaleX(0.9582);">Project</div><div class="tx" style="left:167.60px;top:27.89px;font-size:11.5px;color:#000;font-weight:normal;transform:scaleX(0.9138);">Flash</div><div class="tx" style="left:209.50px;top:27.89px;font-size:11.5px;color:#000;font-weight:normal;transform:scaleX(1.0121);">Debug</div><div class="tx" style="left:259.50px;top:27.89px;font-size:11.5px;color:#000;font-weight:normal;transform:scaleX(0.9661);">Peripherals</div><div class="tx" style="left:331.00px;top:27.89px;font-size:11.5px;color:#000;font-weight:normal;transform:scaleX(0.9568);">Tools</div><div class="tx" style="left:373.40px;top:27.89px;font-size:11.5px;color:#000;font-weight:normal;transform:scaleX(0.8044);">SVCS</div><div class="tx" style="left:414.20px;top:27.89px;font-size:11.5px;color:#000;font-weight:normal;transform:scaleX(1.0707);">Window</div><div class="tx" style="left:473.20px;top:27.89px;font-size:11.5px;color:#000;font-weight:normal;transform:scaleX(0.9934);">Help</div><div class="tx" style="left:175.00px;top:81.59px;font-size:11.5px;color:#000;font-weight:normal;transform:scaleX(0.9535);">Template</div><div class="tx" style="left:4.50px;top:105.59px;font-size:11.5px;color:#000;font-weight:normal;transform:scaleX(0.9638);">Project</div><div class="tx" style="left:46.30px;top:127.94px;font-size:12px;color:#000;font-weight:normal;transform:scaleX(0.9914);">Project: Template</div><div class="tx" style="left:66.80px;top:147.94px;font-size:12px;color:#000;font-weight:normal;transform:scaleX(0.9876);">Template</div><div class="tx" style="left:86.40px;top:167.94px;font-size:12px;color:#000;font-weight:normal;transform:scaleX(0.7828);">USER</div><div class="tx" style="left:106.30px;top:187.94px;font-size:12px;color:#000;font-weight:normal;transform:scaleX(0.9988);">main.c</div><div class="tx" style="left:106.30px;top:207.94px;font-size:12px;color:#000;font-weight:normal;transform:scaleX(0.9512);">stm32f10x_it.c</div><div class="tx" style="left:106.30px;top:227.94px;font-size:12px;color:#000;font-weight:normal;transform:scaleX(0.9463);">system_stm32f10x.c</div><div class="tx" style="left:86.50px;top:247.94px;font-size:12px;color:#000;font-weight:normal;transform:scaleX(0.8364);">CORE</div><div class="tx" style="left:86.50px;top:267.94px;font-size:12px;color:#000;font-weight:normal;transform:scaleX(0.8726);">FWLIB</div><div class="tx" style="left:86.50px;top:287.94px;font-size:12px;color:#000;font-weight:normal;transform:scaleX(0.8552);">SYSTEM</div><div class="tx" style="left:106.00px;top:307.94px;font-size:12px;color:#000;font-weight:normal;transform:scaleX(0.9801);">delay.c</div><div class="tx" style="left:106.00px;top:327.94px;font-size:12px;color:#000;font-weight:normal;transform:scaleX(0.8997);">sys.c</div><div class="tx" style="left:106.00px;top:347.94px;font-size:12px;color:#000;font-weight:normal;transform:scaleX(0.9579);">usart.c</div><div class="tx" style="left:106.00px;top:367.94px;font-size:12px;color:#000;font-weight:normal;transform:scaleX(1.0671);">motor.c</div><div class="tx" style="left:106.00px;top:387.94px;font-size:12px;color:#000;font-weight:normal;transform:scaleX(0.9558);">keysacn.c</div><div class="tx" style="left:106.00px;top:407.94px;font-size:12px;color:#000;font-weight:normal;transform:scaleX(0.8788);">IRSEARCH.c</div><div class="tx" style="left:106.00px;top:427.94px;font-size:12px;color:#000;font-weight:normal;transform:scaleX(0.9699);">IRAvoid.c</div><div class="tx" style="left:106.00px;top:447.94px;font-size:12px;color:#000;font-weight:normal;transform:scaleX(1.0299);">timer.c</div><div class="tx" style="left:106.00px;top:467.94px;font-size:12px;color:#000;font-weight:normal;transform:scaleX(0.9761);">UltrasonicWave.c</div><div class="tx" style="left:106.00px;top:487.94px;font-size:12px;color:#000;font-weight:normal;transform:scaleX(0.9315);">Server.c</div><div class="tx" style="left:86.00px;top:507.94px;font-size:12px;color:#000;font-weight:normal;transform:scaleX(0.8881);">README</div><div class="tx" style="left:106.00px;top:527.94px;font-size:12px;color:#000;font-weight:normal;transform:scaleX(0.8960);">README.TXT</div><div class="tx" style="left:24.00px;top:690.89px;font-size:11.5px;color:#000;font-weight:normal;transform:scaleX(0.9777);">Project</div><div class="tx" style="left:88.60px;top:690.89px;font-size:11.5px;color:#7e7e7e;font-weight:normal;transform:scaleX(0.9697);">Books</div><div class="tx" style="left:149.30px;top:690.89px;font-size:11.5px;color:#7e7e7e;font-weight:normal;transform:scaleX(1.0128);">Functions</div><div class="tx" style="left:229.00px;top:690.89px;font-size:11.5px;color:#7e7e7e;font-weight:normal;transform:scaleX(0.9500);">Templates</div><div class="tx" style="left:455.60px;top:108.69px;font-size:11.5px;color:#000;font-weight:normal;transform:scaleX(0.9750);">main.c*</div><div class="tx" style="left:536.30px;top:108.69px;font-size:11.5px;color:#000;font-weight:normal;transform:scaleX(1.0035);">UltrasonicWave.h*</div><div class="tx" style="left:674.40px;top:108.69px;font-size:11.5px;color:#000;font-weight:bold;transform:scaleX(0.9755);">motor.h*</div><div class="tx" style="left:763.50px;top:108.69px;font-size:11.5px;color:#000;font-weight:normal;transform:scaleX(0.9405);">keysacn.h</div><div class="tx" style="left:856.30px;top:108.69px;font-size:11.5px;color:#000;font-weight:normal;transform:scaleX(0.9410);">Server.h</div><div class="tx" style="left:851.50px;top:714.09px;font-size:11.5px;color:#000;font-weight:normal;transform:scaleX(0.9762);">ST-Link Debugger</div><div class="tx" style="left:1128.50px;top:714.09px;font-size:11.5px;color:#000;font-weight:normal;transform:scaleX(0.8922);">L:28 C:37</div><div class="tx" style="left:1221.50px;top:714.09px;font-size:11.5px;color:#7e7e7e;font-weight:normal;transform:scaleX(0.8243);">CAP</div><div class="tx" style="left:1247.00px;top:714.09px;font-size:11.5px;color:#000;font-weight:normal;transform:scaleX(0.9732);">NUM</div><div class="tx" style="left:1279.50px;top:714.09px;font-size:11.5px;color:#7e7e7e;font-weight:normal;transform:scaleX(0.7984);">SCRL</div><div class="tx" style="left:1310.50px;top:714.09px;font-size:11.5px;color:#7e7e7e;font-weight:normal;transform:scaleX(0.9028);">OVR</div><div class="tx" style="left:1339.50px;top:714.09px;font-size:11.5px;color:#7e7e7e;font-weight:normal;transform:scaleX(0.9616);">R/W</div>
</body></html>
